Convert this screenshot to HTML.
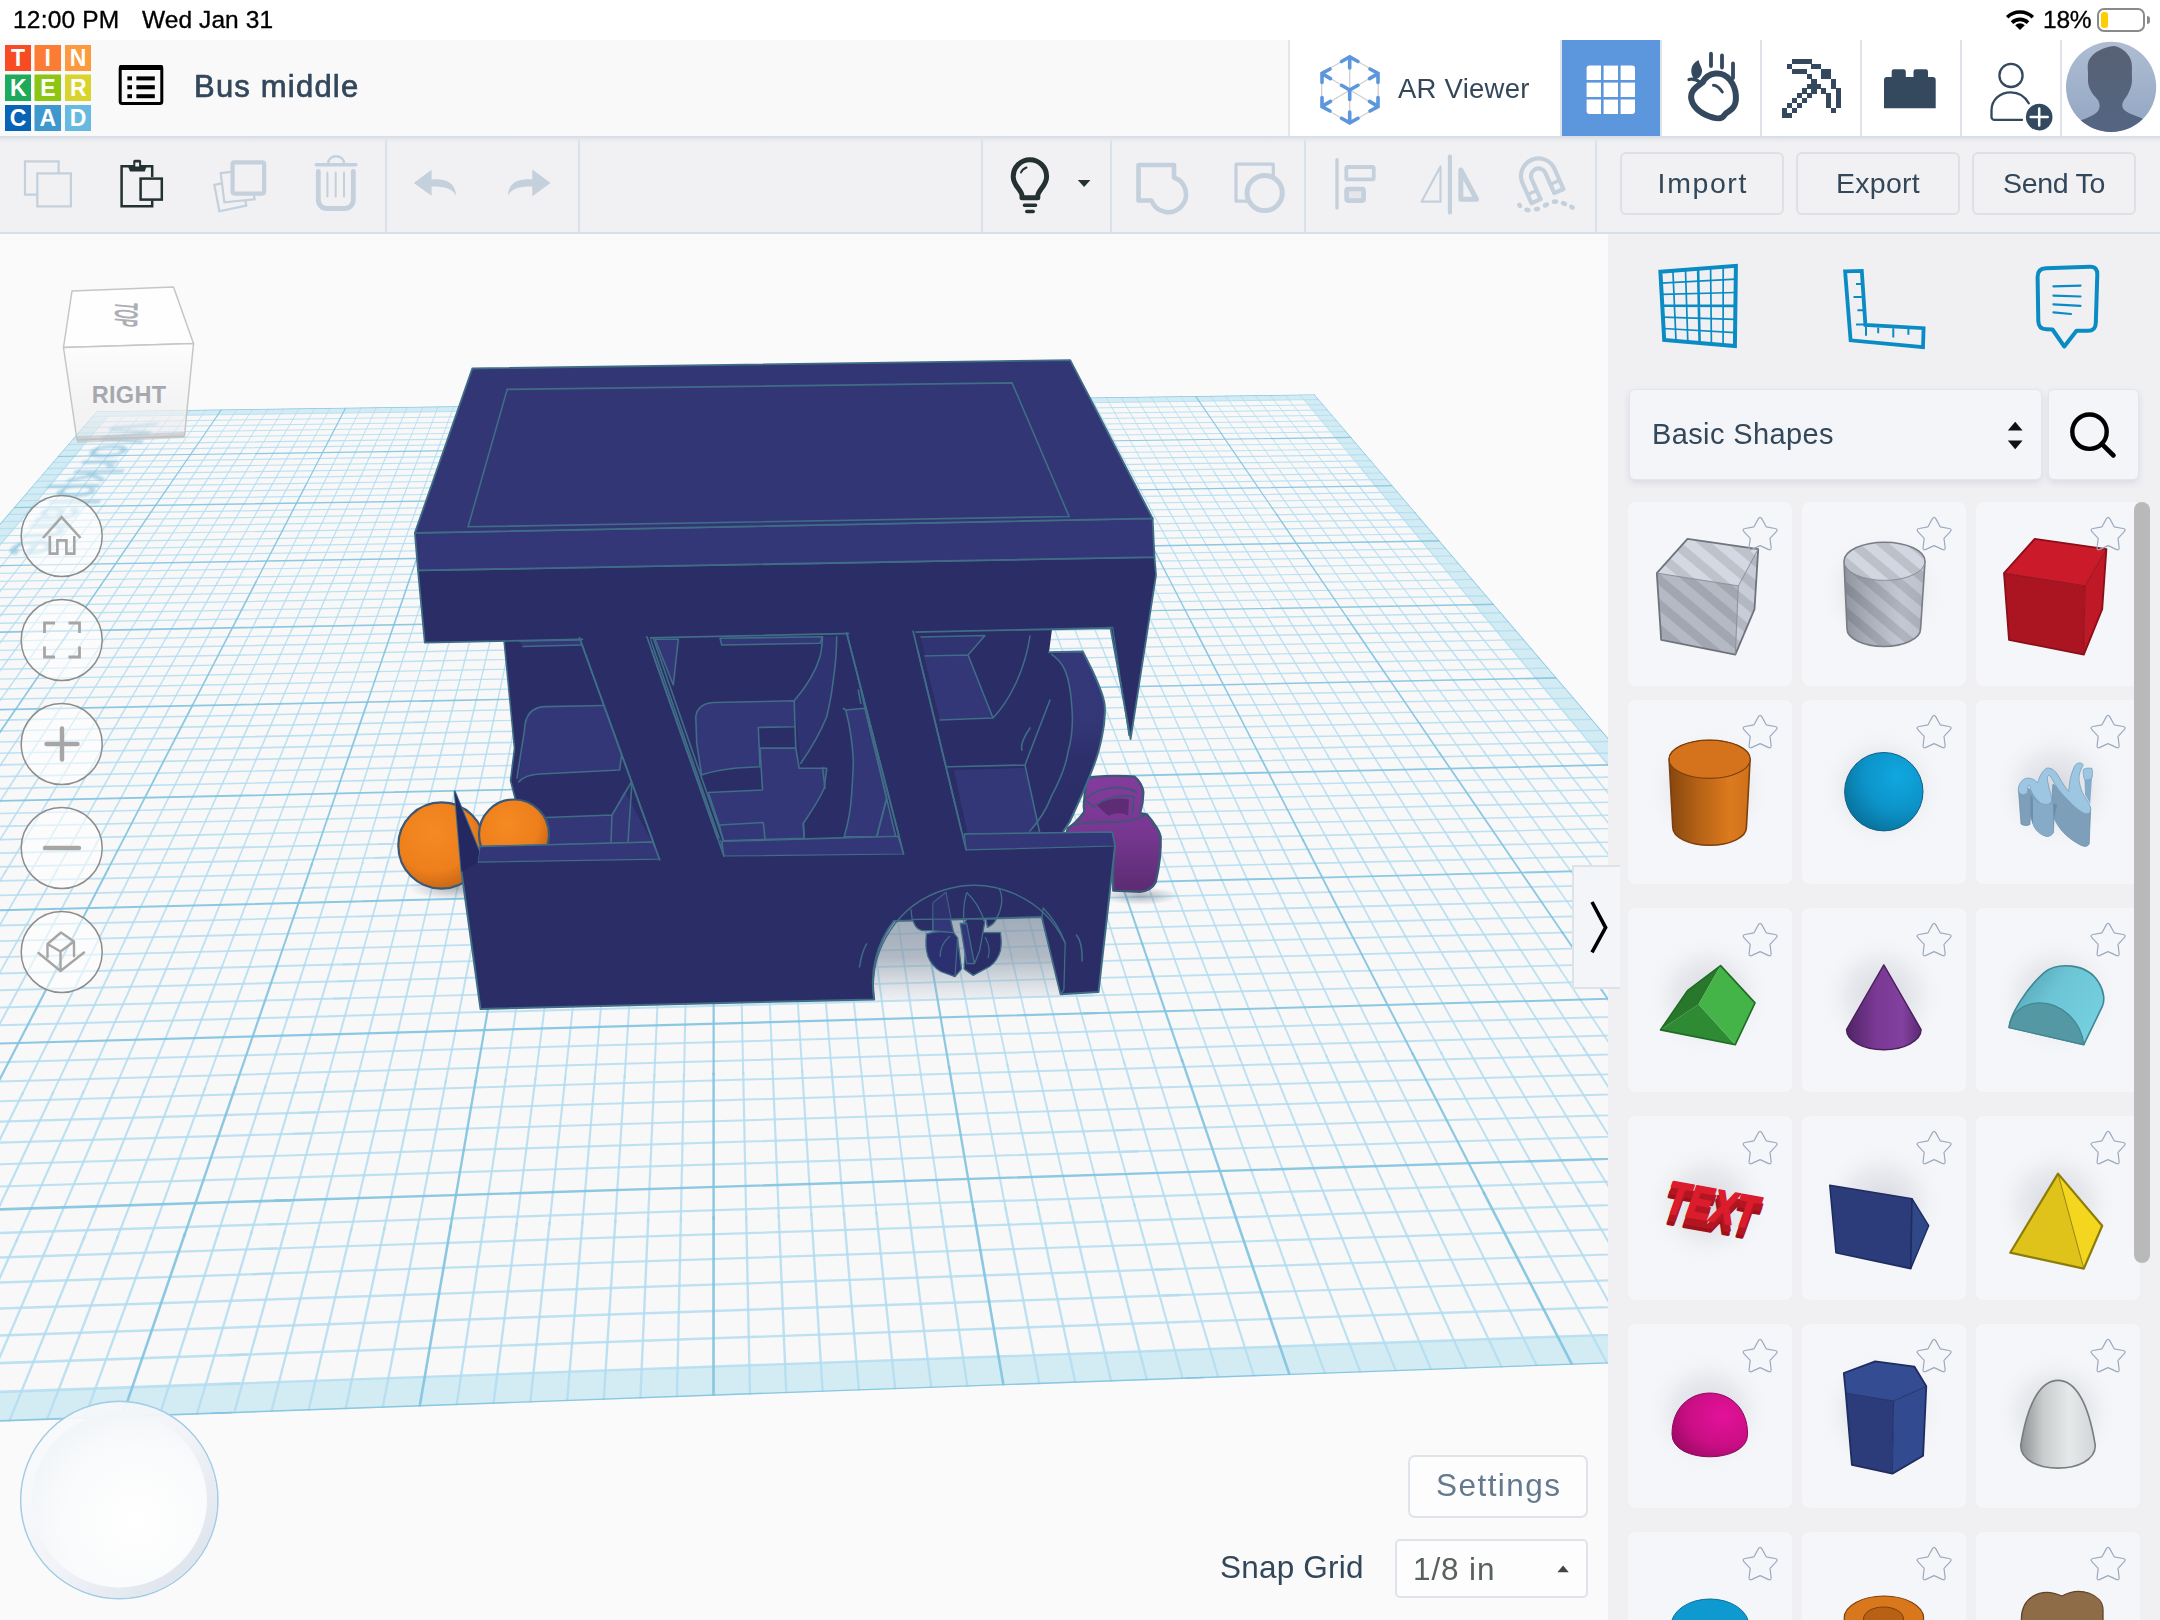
<!DOCTYPE html>
<html><head><meta charset="utf-8"><title>Tinkercad</title>
<style>
*{box-sizing:border-box;margin:0;padding:0}
html,body{width:2160px;height:1620px;overflow:hidden;background:#fff;font-family:"Liberation Sans",sans-serif}
.abs{position:absolute}
#status .t,#title,#arv,.btn,#bs,#settings,#snap,#snapv{will-change:transform}
#status{position:absolute;left:0;top:0;width:2160px;height:40px;background:#fff;color:#000}
#status .t{position:absolute;top:5px;font-size:24.5px;line-height:30px;letter-spacing:.2px;white-space:nowrap;-webkit-text-stroke:.35px #000}
#header{position:absolute;left:0;top:40px;width:2160px;height:96px;background:#f9f9f9}
#header .right{position:absolute;left:1288px;top:0;width:872px;height:96px;background:#fff;border-left:2px solid #e4e6ec}
#hshadow{position:absolute;left:0;top:136px;width:2160px;height:7px;background:linear-gradient(#d5dbe3,#e4e7ec 40%,rgba(241,241,244,0));z-index:5}
#toolbar{position:absolute;left:0;top:136px;width:2160px;height:98px;background:#f1f1f4;border-bottom:2px solid #d9dfe6}
.vsep{position:absolute;top:0;width:2px;height:96px;background:#dbe1e8}
#canvas{position:absolute;left:0;top:234px;width:1608px;height:1386px;background:#fafafa;overflow:hidden}
#panel{position:absolute;left:1608px;top:234px;width:552px;height:1386px;background:#f0f0f3;overflow:hidden}
.hsep{position:absolute;top:0;width:2px;height:96px;background:#dfe3e9}
.btn{position:absolute;top:16px;height:63px;border:2px solid #dce1e8;border-radius:6px;color:#33475b;font-size:28.5px;line-height:59px;text-align:center;letter-spacing:1.2px;background:#f1f1f4}
.card{position:absolute;width:164px;height:184px;background:#f5f6f9;border-radius:8px}
.star{position:absolute;left:113px;top:13px;width:38px;height:38px}
</style></head><body>
<div id="status">
 <div class="t" id="st1" style="left:12.5px">12:00 PM</div>
 <div class="t" id="st2" style="left:142px;letter-spacing:.08px">Wed Jan 31</div>
 <svg class="abs" style="left:2004px;top:7px" width="32" height="26" viewBox="0 0 32 26"><g fill="none" stroke="#000" stroke-width="3.6" stroke-linecap="butt"><path d="M3.2 10.2 A18.5 18.5 0 0 1 28.8 10.2"/><path d="M8 15.6 A11.6 11.6 0 0 1 24 15.6"/></g><path d="M16 23 L11.2 18.2 A6.6 6.6 0 0 1 20.8 18.2 Z" fill="#000"/></svg>
 <div class="t" id="st3" style="left:2043px;letter-spacing:-.25px">18%</div>
 <div class="abs" style="left:2097px;top:8px;width:48px;height:24px;border:2px solid #8a8a8a;border-radius:7px"></div>
 <div class="abs" style="left:2101px;top:12px;width:7px;height:16px;background:#ffcc00;border-radius:3px"></div>
 <div class="abs" style="left:2147px;top:16px;width:3px;height:8px;background:#8a8a8a;border-radius:0 3px 3px 0"></div>
</div>
<div id="header">
 <!-- logo -->
 <svg class="abs" style="left:0;top:0" width="100" height="96" viewBox="0 0 100 96">
  <g>
   <rect x="5" y="5" width="26" height="26" fill="#f84b24"/><rect x="34.5" y="5" width="26.5" height="26" fill="#fb7c35"/><rect x="65" y="5" width="26" height="26" fill="#fb9a3e"/>
   <rect x="5" y="34.5" width="26" height="26.5" fill="#1fa95b"/><rect x="34.5" y="34.5" width="26.5" height="26.5" fill="#8cc613"/><rect x="65" y="34.5" width="26" height="26.5" fill="#d8d32d"/>
   <rect x="5" y="65" width="26" height="26" fill="#0763b5"/><rect x="34.5" y="65" width="26.5" height="26" fill="#3e97cd"/><rect x="65" y="65" width="26" height="26" fill="#68b9e0"/>
  </g>
  <g fill="#fff" font-family="Liberation Sans" font-weight="bold" font-size="23" text-anchor="middle">
   <text x="18" y="26.3">T</text><text x="47.8" y="26.3">I</text><text x="78" y="26.3">N</text>
   <text x="18.3" y="56.2">K</text><text x="47.8" y="56.2">E</text><text x="78.3" y="56.2">R</text>
   <text x="18" y="86.3">C</text><text x="47.8" y="86.3">A</text><text x="78" y="86.3">D</text>
  </g>
 </svg>
 <!-- list icon -->
 <svg class="abs" style="left:117px;top:23px" width="48" height="44" viewBox="0 0 48 44">
  <rect x="3.2" y="3.5" width="41.6" height="37" rx="2" fill="none" stroke="#000" stroke-width="3"/>
  <rect x="2" y="2" width="44" height="5" rx="1.5" fill="#000"/>
  <g fill="#000"><rect x="10.4" y="13.4" width="4.6" height="4"/><rect x="19.4" y="13.4" width="18.4" height="4"/>
  <rect x="10.4" y="22.2" width="4.6" height="4.1"/><rect x="19.4" y="22.2" width="18.4" height="4.1"/>
  <rect x="10.4" y="31.2" width="4.6" height="4"/><rect x="19.4" y="31.2" width="18.4" height="4"/></g>
 </svg>
 <div class="abs" id="title" style="left:194.4px;top:27px;font-size:31px;line-height:40px;color:#33475b;white-space:nowrap;-webkit-text-stroke:.7px #33475b;letter-spacing:1.2px">Bus middle</div>
 <div class="right"></div>
</div>
<div id="hshadow"></div>
<!-- header right content, page coords -->
<div class="abs" style="left:1560px;top:40px;width:100px;height:96px;background:#5c96dc"></div>
<div class="abs" style="left:1560px;top:40px;width:2px;height:96px;background:#dfe3e9"></div>
<div class="abs" style="left:1660px;top:40px;width:2px;height:96px;background:#dfe3e9"></div>
<div class="abs" style="left:1760px;top:40px;width:2px;height:96px;background:#dfe3e9"></div>
<div class="abs" style="left:1860px;top:40px;width:2px;height:96px;background:#dfe3e9"></div>
<div class="abs" style="left:1960px;top:40px;width:2px;height:96px;background:#dfe3e9"></div>
<div class="abs" style="left:2060px;top:40px;width:2px;height:96px;background:#dfe3e9"></div>
<div class="abs" id="arv" style="left:1397.6px;top:68.5px;font-size:27.5px;line-height:40px;color:#33475b;white-space:nowrap;letter-spacing:.25px">AR Viewer</div>
<!-- AR cube icon -->
<svg class="abs" style="left:1316px;top:50px" width="68" height="80" viewBox="1316 50 68 80">
 <g stroke="#cfcfcf" stroke-width="1.3" fill="none"><path d="M1349.7 56.7 L1378.2 73.3 L1378.2 106.7 L1349.7 123 L1321.7 106.7 L1321.7 73.3 Z"/><path d="M1349.7 56.7 V123 M1321.7 73.3 L1378.2 106.7 M1378.2 73.3 L1321.7 106.7"/></g>
 <g stroke="#5c96dc" stroke-width="3.6" fill="none" stroke-linecap="round" stroke-linejoin="miter">
  <path d="M1341.5 61.5 L1349.7 56.9 L1358 61.5 M1349.7 57 V68"/>
  <path d="M1341.5 118.3 L1349.7 122.9 L1358 118.3 M1349.7 122.6 V112"/>
  <path d="M1322 82.5 V73.3 L1330 69 M1322 73.6 L1330.5 78.6"/>
  <path d="M1378 82.5 V73.3 L1370 69 M1378 73.6 L1369.5 78.6"/>
  <path d="M1322 97.5 V106.7 L1330 111 M1322 106.4 L1330.5 101.4"/>
  <path d="M1378 97.5 V106.7 L1370 111 M1378 106.4 L1369.5 101.4"/>
  <path d="M1341.5 85.3 L1349.7 90 L1358 85.3 M1349.7 90 V99.5"/>
 </g>
</svg>
<!-- grid icon -->
<svg class="abs" style="left:1586.300px;top:64.600px" width="50" height="50" viewBox="0 0 50 50" fill="#fff">
 <path d="M0.6 3.6 a3 3 0 0 1 3-3 H15 V15 H0.6Z"/><rect x="17.6" y="0.6" width="14.4" height="14.4"/><path d="M34.6 0.6 H46 a3 3 0 0 1 3 3 V15 H34.6Z"/>
 <rect x="0.6" y="17.6" width="14.4" height="14.4"/><rect x="17.6" y="17.6" width="14.4" height="14.4"/><rect x="34.6" y="17.6" width="14.4" height="14.4"/>
 <path d="M0.6 34.6 H15 V49 H3.6 a3 3 0 0 1 -3 -3Z"/><rect x="17.6" y="34.6" width="14.4" height="14.4"/><path d="M34.6 34.6 H49 V46 a3 3 0 0 1 -3 3 H34.6Z"/>
</svg>
<!-- apple/hand icon -->
<svg class="abs" style="left:1680px;top:48px" width="64" height="78" viewBox="1680 48 64 78">
 <g fill="none" stroke="#34495e" stroke-linecap="round">
  <path stroke-width="6" d="M1702.5 82.5 C1708 72 1722 70 1730 80 C1738 90 1736.5 103 1733.5 107 C1731 111.5 1727 111 1724.500 115 C1722 120 1714 118.500 1706 115 C1696 110.5 1689.500 102 1691.500 94 C1693 88 1698 86 1702.5 82.5Z"/>
  <path stroke-width="3.8" d="M1711 53.700 V66 M1722 55.500 V67.500 M1733 63.500 V78"/>
  <path stroke-width="3.2" d="M1689 79.500 C1693 78.500 1697 80 1700.500 82.500"/>
  <path stroke-width="3" d="M1713.500 85.300 C1717.500 85.500 1720 88.500 1722.300 92"/>
 </g>
 <path fill="#34495e" d="M1698.600 60 C1690 64 1689.500 73.500 1694.500 79.500 C1700 79 1703.500 73 1701.500 68 C1700.500 65 1699 63 1698.600 60Z"/>
 <path fill="#fff" d="M1709 66.800 h4 l0 3 h-4z M1720 68.800 l4 1.200 v3 h-4z M1731 76 l4.200 5.500 v3 h-4.200z" opacity="0"/>
</svg>
<!-- brick -->
<svg class="abs" style="left:1880px;top:65px" width="60" height="48" viewBox="1880 65 60 48" fill="#34495e">
 <path d="M1884 80 a3 3 0 0 1 3-3 h4.700 v-5.500 a2.300 2.300 0 0 1 2.300-2.300 h9.500 a2.300 2.300 0 0 1 2.300 2.300 v5.500 h7.700 v-5.500 a2.300 2.300 0 0 1 2.300-2.300 h9.900 a2.300 2.300 0 0 1 2.300 2.300 v5.500 h4.700 a3 3 0 0 1 3 3 v28.300 h-51.700z"/>
</svg>
<!-- person add -->
<svg class="abs" style="left:1985px;top:58px" width="72" height="76" viewBox="1985 58 72 76">
 <g fill="none" stroke="#34495e" stroke-width="2.300" stroke-linecap="round">
  <circle cx="2011" cy="75.400" r="11.600"/>
  <path d="M2022 119.900 H1994.500 a3 3 0 0 1 -3-3 V110.500 C1991.500 100 2000 92.300 2010.700 92.300 C2018.500 92.300 2025 96.500 2028.800 103.200"/>
 </g>
 <circle cx="2039.200" cy="117.100" r="15" fill="#fff"/>
 <circle cx="2039.200" cy="117.100" r="13.300" fill="#34495e"/>
 <path d="M2030.700 117.100 h17 M2039.200 108.600 v17" stroke="#fff" stroke-width="2.500" stroke-linecap="round"/>
</svg>
<!-- avatar -->
<svg class="abs" style="left:2064px;top:40px" width="96" height="96" viewBox="2064 40 96 96">
 <defs><linearGradient id="avbg" x1="0" y1="0" x2="0" y2="1"><stop offset="0" stop-color="#aebdd2"/><stop offset="1" stop-color="#92a5c2"/></linearGradient>
 <linearGradient id="avfg" x1="0" y1="0" x2="0" y2="1"><stop offset="0" stop-color="#586174"/><stop offset="1" stop-color="#536684"/></linearGradient>
 <clipPath id="avc"><circle cx="2111.100" cy="86.900" r="45.100"/></clipPath></defs>
 <circle cx="2111.100" cy="86.900" r="45.100" fill="url(#avbg)"/>
 <g clip-path="url(#avc)"><path fill="url(#avfg)" d="M2114 46 C2104 47 2093 52 2089 60 C2086.500 66 2088.500 72 2088 78 C2087.500 85 2090 90 2093.500 95 C2097 99 2100 101 2099.500 107 C2099 112 2094 115 2087 118 C2080 121 2072 123 2066 126 V140 H2158 V126 C2152 123 2146 120 2140 117.500 C2131 114 2124 112 2122.500 107 C2121.500 102 2125 99 2127.500 95 C2130 90 2132.500 85 2132 78 C2131.500 70 2133 64 2130 58 C2127 52 2121 47 2114 46Z"/></g>
</svg>
<svg class="abs" style="left:1781.6px;top:59.4px" width="60" height="60" viewBox="0 0 60 60" fill="#34495e" shape-rendering="crispEdges"><rect x="9.81" y="0.00" width="5.06" height="5.06"/><rect x="14.72" y="0.00" width="5.06" height="5.06"/><rect x="19.63" y="0.00" width="5.06" height="5.06"/><rect x="24.54" y="0.00" width="5.06" height="5.06"/><rect x="4.91" y="4.91" width="5.06" height="5.06"/><rect x="29.44" y="4.91" width="5.06" height="5.06"/><rect x="34.35" y="4.91" width="5.06" height="5.06"/><rect x="9.81" y="9.81" width="5.06" height="5.06"/><rect x="14.72" y="9.81" width="5.06" height="5.06"/><rect x="19.63" y="9.81" width="5.06" height="5.06"/><rect x="39.26" y="9.81" width="5.06" height="5.06"/><rect x="44.16" y="9.81" width="5.06" height="5.06"/><rect x="24.54" y="14.72" width="5.06" height="5.06"/><rect x="39.26" y="14.72" width="5.06" height="5.06"/><rect x="44.16" y="14.72" width="5.06" height="5.06"/><rect x="29.44" y="19.63" width="5.06" height="5.06"/><rect x="49.07" y="19.63" width="5.06" height="5.06"/><rect x="24.54" y="24.54" width="5.06" height="5.06"/><rect x="29.44" y="24.54" width="5.06" height="5.06"/><rect x="34.35" y="24.54" width="5.06" height="5.06"/><rect x="49.07" y="24.54" width="5.06" height="5.06"/><rect x="19.63" y="29.44" width="5.06" height="5.06"/><rect x="29.44" y="29.44" width="5.06" height="5.06"/><rect x="39.26" y="29.44" width="5.06" height="5.06"/><rect x="53.98" y="29.44" width="5.06" height="5.06"/><rect x="14.72" y="34.35" width="5.06" height="5.06"/><rect x="24.54" y="34.35" width="5.06" height="5.06"/><rect x="44.16" y="34.35" width="5.06" height="5.06"/><rect x="53.98" y="34.35" width="5.06" height="5.06"/><rect x="9.81" y="39.26" width="5.06" height="5.06"/><rect x="19.63" y="39.26" width="5.06" height="5.06"/><rect x="44.16" y="39.26" width="5.06" height="5.06"/><rect x="53.98" y="39.26" width="5.06" height="5.06"/><rect x="4.91" y="44.16" width="5.06" height="5.06"/><rect x="14.72" y="44.16" width="5.06" height="5.06"/><rect x="44.16" y="44.16" width="5.06" height="5.06"/><rect x="53.98" y="44.16" width="5.06" height="5.06"/><rect x="0.00" y="49.07" width="5.06" height="5.06"/><rect x="9.81" y="49.07" width="5.06" height="5.06"/><rect x="49.07" y="49.07" width="5.06" height="5.06"/><rect x="0.00" y="53.98" width="5.06" height="5.06"/><rect x="4.91" y="53.98" width="5.06" height="5.06"/></svg>
<div id="toolbar">
 <div class="vsep" style="left:385px"></div><div class="vsep" style="left:578px"></div><div class="vsep" style="left:981px"></div><div class="vsep" style="left:1110px"></div><div class="vsep" style="left:1304px"></div><div class="vsep" style="left:1594.5px"></div>
 <div class="btn" id="b1" style="left:1620px;width:164px;letter-spacing:1.6px;text-indent:1.6px">Import</div>
 <div class="btn" id="b2" style="left:1796px;width:164px;letter-spacing:.24px">Export</div>
 <div class="btn" id="b3" style="left:1972px;width:164px;letter-spacing:-.27px">Send To</div>
</div>
<!-- toolbar icons, page coords -->
<svg class="abs" style="left:0;top:136px" width="1608" height="98" viewBox="0 136 1608 98">
 <g fill="none" stroke="#c4d0dc">
  <!-- copy -->
  <rect x="25" y="161.400" width="33.600" height="33.200" stroke-width="2.200"/>
  <rect x="37.300" y="173.400" width="33.600" height="33" stroke-width="2.200" fill="#f1f1f4"/>
  <!-- duplicate -->
  <g stroke-width="2.200" fill="#f1f1f4"><path d="M214.600 201.600 L240 196.400 L246 225 L220.500 227.300Z" transform="translate(0,0)" opacity="0"/>
   <path d="M214.300 184.800 L241 179.500 L246.300 205.600 L219.400 211.300Z"/>
   <path d="M220.700 173.100 L251 169.500 L254.600 199.300 L224.400 202.400Z"/></g>
  <rect x="232.600" y="162.400" width="31.500" height="31.200" rx="2" stroke-width="4.200" fill="#f1f1f4"/>
  <!-- trash -->
  <g stroke-linecap="round"><path d="M316.200 164.800 H356" stroke-width="3.400"/><path d="M328.300 163.500 v-1 a7.800 6.200 0 0 1 15.600 0 v1" stroke-width="2.400"/>
  <path d="M318.300 171.500 V200 a8.500 8.500 0 0 0 8.500 8.500 H344.800 a8.500 8.500 0 0 0 8.500-8.500 V171.500" stroke-width="4.800"/>
  <path d="M327.400 172.500 V196.500 M335.700 172.500 V196.500 M344 172.500 V196.500" stroke-width="2"/></g>
 </g>
 <!-- paste -->
 <g fill="none" stroke="#233131" stroke-width="2.500">
  <path d="M152.200 200.500 V206.200 H121.600 V166.300 H152.200 V177"/>
  <rect x="140.600" y="178.600" width="21.200" height="21" fill="#f1f1f4"/>
 </g>
 <path d="M127.500 165 H147 L144.800 171.500 H130Z" fill="#233131"/><rect x="133.300" y="159.800" width="7.800" height="8" rx="1.500" fill="#233131"/><rect x="135.300" y="162.500" width="3.800" height="4" fill="#f1f1f4"/>
 <!-- undo / redo -->
 <g fill="#c4d0dc">
  <path d="M413.700 183 L431.600 169.800 V179.500 C444 178.500 455.500 181.500 456 195.700 C452.500 188.500 445 186.500 431.600 186.600 V195.800Z"/>
  <path d="M550.600 183 L532.300 169.500 V179.500 C520 178.500 508.500 181.500 508 195.700 C511.500 188.500 519 186.500 532.300 186.600 V196.200Z"/>
 </g>
 <!-- bulb -->
 <g fill="none" stroke="#233131" stroke-linecap="round">
  <path stroke-width="5" d="M1022 197.800 V196 C1022 190 1013.200 186 1013.200 176.400 A16.700 16.700 0 0 1 1046.600 176.400 C1046.600 186 1037.800 190 1037.800 196 V197.800Z" stroke-linejoin="round"/>
  <path stroke-width="2" d="M1021 172.500 C1022 170 1024 168.500 1026.500 167.500"/>
  <path stroke-width="3.600" d="M1024.500 205.300 H1035.500 M1026.800 211.500 H1033.200"/>
 </g>
 <path d="M1077.800 179.900 H1090.400 L1084.100 186.900Z" fill="#233131"/>
 <!-- group -->
 <g fill="none" stroke="#c4d0dc" stroke-linejoin="round">
  <path stroke-width="4.600" d="M1138.500 165 H1174 V177.500 A17.800 17.800 0 1 1 1151.500 200.500 H1138.500Z"/>
  <rect x="1236" y="164.200" width="37.300" height="37" stroke-width="3.200"/>
  <circle cx="1264.700" cy="193" r="17.600" stroke-width="5" fill="#f1f1f4"/>
  <!-- align -->
  <path d="M1337 159.800 V208" stroke-width="3.400" stroke-linecap="round"/>
  <rect x="1346.300" y="167" width="27.400" height="12.400" rx="1.500" stroke-width="3.800"/>
  <rect x="1346.600" y="189" width="17" height="11.600" rx="1.500" stroke-width="4.600" fill="#e4e6ea"/>
  <!-- mirror -->
  <path d="M1449.900 156.500 V212.500" stroke-width="4.200" stroke-linecap="round"/>
  <path d="M1440.500 166.500 V201.700 H1421.500Z" stroke-width="2.200"/>
  <path d="M1460.800 170 V199.200 H1476.500Z" stroke-width="5"/>
 </g>
 <!-- magnet -->
 <g transform="translate(1538.500,176) rotate(-24)" fill="none" stroke="#c4d0dc" stroke-width="4.200" stroke-linejoin="round">
  <path d="M-17.500 22 V0 A17.500 17.500 0 0 1 17.500 0 V22 H7.500 V0 A7.500 7.500 0 0 0 -7.500 0 V22Z"/>
  <path d="M-17.500 12.500 H-7.500 M17.500 12.500 H7.500" stroke-width="3.400"/>
 </g>
 <g fill="#c4d0dc">
  <ellipse cx="1519.700" cy="205.400" rx="2.300" ry="2.800" transform="rotate(-30 1519.700 205.400)"/><ellipse cx="1527.500" cy="210" rx="3.300" ry="2.400" transform="rotate(10 1527.500 210)"/><ellipse cx="1537" cy="209" rx="3.300" ry="2.400" transform="rotate(-15 1537 209)"/><ellipse cx="1546" cy="205" rx="3.300" ry="2.400" transform="rotate(-25 1546 205)"/><ellipse cx="1555" cy="201.600" rx="3.300" ry="2.400" transform="rotate(-5 1555 201.600)"/><ellipse cx="1564" cy="203.500" rx="3.300" ry="2.400" transform="rotate(20 1564 203.500)"/><ellipse cx="1572" cy="207.200" rx="3" ry="2.300" transform="rotate(30 1572 207.200)"/>
 </g>
</svg>
<div id="canvas"></div><div id="panel"></div>
<svg class="abs" style="left:0;top:234px" width="1608" height="1386" viewBox="0 234 1608 1386">
<g>
<clipPath id="planeclip"><path d="M96.7 411.2L1314.5 394.5L2126.3 1344.8L-795.5 1450.4Z"/></clipPath>
<g clip-path="url(#planeclip)">
<path d="M96.7 411.2L1314.5 394.5L2126.3 1344.8L-795.5 1450.4Z" fill="#f8f8f9"/>
<path d="M96.7 411.2L1314.5 394.5L2126.3 1344.8L-795.5 1450.4Z M107.8 416.4L-730.5 1417.8L2069.2 1318.5L1303.9 399.8Z" fill="#d3ecf4" fill-rule="evenodd"/>
<g fill="none" stroke="#b2ddef" stroke-opacity="0.84">
<path stroke-width="1.0" d="M112.6 410.7L80.8 448.6M128.2 410.4L97.3 448.4M143.8 410.2L113.7 448.2M159.4 410.0L130.2 447.9M175.0 409.8L146.6 447.7M190.6 409.6L163.0 447.4M206.2 409.4L179.4 447.2M237.3 408.9L212.1 446.7M252.8 408.7L228.5 446.5M268.3 408.5L244.9 446.2M283.9 408.3L261.2 446.0M299.4 408.1L277.5 445.8M314.8 407.9L293.8 445.5M330.3 407.7L310.1 445.3M361.3 407.2L342.7 444.8M376.7 407.0L359.0 444.6M392.2 406.8L375.2 444.3M407.6 406.6L391.5 444.1M423.0 406.4L407.7 443.9M438.4 406.2L423.9 443.6M453.8 406.0L440.1 443.4M484.6 405.5L472.5 442.9M499.9 405.3L488.7 442.7M515.3 405.1L504.9 442.5M530.6 404.9L521.0 442.2M546.0 404.7L537.2 442.0M561.3 404.5L553.3 441.7M576.6 404.3L569.4 441.5M607.2 403.9L601.6 441.0M622.5 403.7L617.7 440.8M637.7 403.4L633.7 440.6M653.0 403.2L649.8 440.3M668.2 403.0L665.8 440.1M683.5 402.8L681.9 439.9M698.7 402.6L697.9 439.6M729.1 402.2L729.9 439.2M744.3 402.0L745.9 438.9M759.5 401.8L761.9 438.7M774.7 401.6L777.8 438.5M789.9 401.3L793.8 438.2M805.0 401.1L809.7 438.0M820.2 400.9L825.7 437.8M850.4 400.5L857.5 437.3M865.5 400.3L873.4 437.1M880.6 400.1L889.3 436.9M895.7 399.9L905.1 436.6M910.8 399.7L921.0 436.4M925.9 399.5L936.9 436.2M940.9 399.3L952.7 435.9M971.0 398.9L984.3 435.5M986.1 398.7L1000.1 435.2M1001.1 398.4L1015.9 435.0M1016.1 398.2L1031.7 434.8M1031.1 398.0L1047.5 434.5M1047.1 433.8L1065.3 474.2M1046.1 397.8L1063.2 434.3M1062.9 433.6L1081.9 473.9M1061.1 397.6L1079.0 434.1M1078.6 433.3L1098.5 473.7M1091.0 397.2L1110.5 433.6M1110.1 432.9L1131.6 473.2M1106.0 397.0L1126.2 433.4M1125.8 432.6L1148.1 472.9M1120.9 396.8L1141.9 433.2M1141.4 432.4L1164.7 472.7M1135.8 396.6L1157.6 432.9M1157.1 432.2L1181.2 472.4M1150.7 396.4L1173.2 432.7M1172.8 432.0L1197.7 472.1M1165.6 396.2L1188.9 432.5M1188.4 431.7L1214.2 471.9M1180.5 396.0L1204.6 432.3M1204.1 431.5L1230.7 471.6M1210.3 395.6L1235.9 431.8M1235.3 431.1L1263.6 471.1M1225.2 395.4L1251.5 431.6M1250.9 430.8L1280.0 470.9M1240.0 395.2L1267.1 431.3M1266.5 430.6L1296.5 470.6M1254.9 395.0L1282.7 431.1M1282.1 430.4L1312.9 470.4M1269.7 394.8L1298.3 430.9M1297.7 430.1L1329.3 470.1M1284.6 394.6L1313.9 430.7M1313.3 429.9L1345.7 469.9M1299.4 394.3L1329.4 430.4M1328.8 429.7L1362.1 469.6"/>
<path stroke-width="1.2" d="M81.5 447.9L46.2 490.0M46.9 489.1L7.6 536.1M8.4 535.1L-35.7 587.9M97.9 447.6L63.6 489.7M64.3 488.8L26.0 535.8M26.8 534.8L-16.2 587.5M114.3 447.4L80.9 489.4M81.6 488.6L44.4 535.5M45.1 534.5L3.3 587.2M130.8 447.1L98.3 489.2M99.0 488.3L62.7 535.2M63.5 534.2L22.8 586.8M147.2 446.9L115.6 488.9M116.3 488.0L81.1 534.9M81.8 533.9L42.3 586.5M163.6 446.7L132.9 488.6M133.6 487.8L99.4 534.6M100.1 533.6L61.8 586.2M179.9 446.4L150.2 488.4M150.8 487.5L117.7 534.3M118.4 533.3L81.2 585.8M212.7 445.9L184.8 487.8M185.4 487.0L154.3 533.7M154.9 532.7L120.1 585.1M229.0 445.7L202.1 487.6M202.6 486.7L172.6 533.4M173.2 532.4L139.5 584.8M245.3 445.5L219.3 487.3M219.9 486.4L190.8 533.1M191.4 532.1L158.9 584.4M261.7 445.2L236.6 487.0M237.1 486.2L209.1 532.8M209.7 531.8L178.2 584.1M278.0 445.0L253.8 486.8M254.3 485.9L227.3 532.5M227.9 531.5L197.6 583.8M294.3 444.8L271.0 486.5M271.5 485.6L245.5 532.2M246.0 531.2L216.9 583.4M310.6 444.5L288.2 486.2M288.7 485.4L263.7 531.9M264.2 530.9L236.2 583.1M343.1 444.0L322.5 485.7M323.0 484.8L300.1 531.3M300.5 530.3L274.8 582.4M359.4 443.8L339.7 485.4M340.1 484.6L318.2 531.0M318.7 530.0L294.1 582.1M375.6 443.6L356.8 485.2M357.2 484.3L336.3 530.7M336.8 529.7L313.3 581.7M391.8 443.3L374.0 484.9M374.3 484.0L354.5 530.4M354.9 529.4L332.6 581.4M408.0 443.1L391.1 484.6M391.5 483.8L372.6 530.1M373.0 529.1L351.8 581.0M424.2 442.9L408.2 484.4M408.5 483.5L390.7 529.8M391.0 528.8L371.0 580.7M440.4 442.6L425.3 484.1M425.6 483.2L408.7 529.5M409.1 528.5L390.2 580.4M472.8 442.2L459.4 483.6M459.7 482.7L444.9 528.9M445.2 527.9L428.5 579.7M488.9 441.9L476.5 483.3M476.8 482.5L462.9 528.6M463.2 527.6L447.6 579.4M505.1 441.7L493.5 483.1M493.8 482.2L480.9 528.3M481.2 527.3L466.8 579.0M521.2 441.4L510.6 482.8M510.8 481.9L498.9 528.0M499.2 527.0L485.9 578.7M537.3 441.2L527.6 482.5M527.8 481.7L516.9 527.7M517.1 526.7L505.0 578.3M553.4 441.0L544.6 482.3M544.8 481.4L534.9 527.4M535.1 526.4L524.0 578.0M569.5 440.7L561.6 482.0M561.7 481.1L552.9 527.1M553.0 526.2L543.1 577.7M601.7 440.3L595.5 481.5M595.6 480.6L588.7 526.5M588.9 525.6L581.1 577.0M617.8 440.0L612.5 481.2M612.6 480.4L606.7 526.2M606.8 525.3L600.2 576.7M633.8 439.8L629.4 480.9M629.5 480.1L624.6 525.9M624.7 525.0L619.1 576.3M649.9 439.6L646.3 480.7M646.4 479.8L642.5 525.6M642.5 524.7L638.1 576.0M665.9 439.3L663.2 480.4M663.3 479.6L660.3 525.3M660.4 524.4L657.1 575.7M681.9 439.1L680.1 480.2M680.2 479.3L678.2 525.0M678.2 524.1L676.0 575.3M697.9 438.9L697.0 479.9M697.0 479.1L696.0 524.7M696.1 523.8L694.9 575.0M729.9 438.4L730.8 479.4M730.7 478.5L731.7 524.2M731.7 523.2L732.7 574.3M745.9 438.2L747.6 479.1M747.6 478.3L749.5 523.9M749.5 522.9L751.6 574.0M761.8 437.9L764.4 478.9M764.4 478.0L767.3 523.6M767.2 522.6L770.5 573.7M777.8 437.7L781.3 478.6M781.2 477.8L785.1 523.3M785.0 522.3L789.3 573.3M793.7 437.5L798.1 478.3M798.0 477.5L802.8 523.0M802.7 522.0L808.2 573.0M809.6 437.2L814.9 478.1M814.8 477.2L820.6 522.7M820.4 521.7L827.0 572.7M825.5 437.0L831.6 477.8M831.5 477.0L838.3 522.4M838.2 521.5L845.8 572.3M857.3 436.6L865.2 477.3M865.0 476.5L873.7 521.8M873.5 520.9L883.3 571.7M873.2 436.3L881.9 477.0M881.7 476.2L891.4 521.5M891.2 520.6L902.1 571.3M889.1 436.1L898.6 476.8M898.4 475.9L909.1 521.2M908.9 520.3L920.8 571.0M904.9 435.9L915.4 476.5M915.2 475.7L926.8 520.9M926.5 520.0L939.5 570.7M920.8 435.6L932.1 476.3M931.8 475.4L944.4 520.6M944.1 519.7L958.2 570.4M936.6 435.4L948.8 476.0M948.5 475.2L962.0 520.4M961.8 519.4L976.9 570.0M952.4 435.2L965.5 475.7M965.2 474.9L979.7 520.1M979.4 519.1L995.6 569.7M984.1 434.7L998.8 475.2M998.5 474.4L1014.9 519.5M1014.5 518.6L1032.9 569.0M999.8 434.5L1015.4 475.0M1015.1 474.1L1032.4 519.2M1032.1 518.3L1051.5 568.7M1015.6 434.3L1032.1 474.7M1031.7 473.9L1050.0 518.9M1049.6 518.0L1070.1 568.4M1031.4 434.0L1048.7 474.5M1048.3 473.6L1067.5 518.6M1067.1 517.7L1088.7 568.1M1064.9 473.4L1085.1 518.3M1084.7 517.4L1107.2 567.7M1081.5 473.1L1102.6 518.0M1102.2 517.1L1125.8 567.4M1125.3 566.4L1152.0 623.0M1098.0 472.9L1120.1 517.7M1119.6 516.8L1144.3 567.1M1143.8 566.0L1171.7 622.7M1131.1 472.3L1155.1 517.2M1154.6 516.2L1181.4 566.4M1180.8 565.4L1211.0 621.9M1147.7 472.1L1172.5 516.9M1172.0 516.0L1199.9 566.1M1199.3 565.1L1230.7 621.6M1164.2 471.8L1190.0 516.6M1189.5 515.7L1218.4 565.8M1217.8 564.7L1250.3 621.2M1180.7 471.6L1207.4 516.3M1206.9 515.4L1236.8 565.4M1236.2 564.4L1270.0 620.8M1197.2 471.3L1224.9 516.0M1224.3 515.1L1255.3 565.1M1254.6 564.1L1289.6 620.4M1213.6 471.1L1242.3 515.7M1241.7 514.8L1273.7 564.8M1273.1 563.8L1309.1 620.1M1230.1 470.8L1259.7 515.4M1259.1 514.5L1292.1 564.5M1291.4 563.4L1328.7 619.7M1263.0 470.3L1294.4 514.9M1293.8 514.0L1328.9 563.8M1328.2 562.8L1367.8 619.0M1279.4 470.0L1311.8 514.6M1311.1 513.7L1347.3 563.5M1346.5 562.5L1387.3 618.6M1295.8 469.8L1329.1 514.3M1328.4 513.4L1365.7 563.2M1364.9 562.1L1406.8 618.2M1312.2 469.5L1346.4 514.0M1345.7 513.1L1384.0 562.9M1383.2 561.8L1426.3 617.9M1328.6 469.3L1363.8 513.7M1363.0 512.8L1402.3 562.5M1401.5 561.5L1445.8 617.5M1345.0 469.0L1381.1 513.4M1380.3 512.5L1420.6 562.2M1419.8 561.2L1465.2 617.1M1361.4 468.8L1398.3 513.2M1397.6 512.2L1438.9 561.9M1438.1 560.9L1484.6 616.8"/>
<path stroke-width="1.4" d="M4.2 586.1L-43.1 645.6M23.7 585.7L-22.3 645.2M43.1 585.4L-1.5 644.8M-0.6 643.6L-51.5 711.3M62.6 585.1L19.2 644.5M20.1 643.2L-29.2 710.9M82.0 584.7L40.0 644.1M40.8 642.8L-7.0 710.4M120.8 584.0L81.4 643.3M82.2 642.0L37.3 709.5M140.2 583.7L102.1 642.9M102.9 641.7L59.5 709.1M159.5 583.4L122.7 642.5M123.5 641.3L81.6 708.6M178.9 583.0L143.4 642.1M144.1 640.9L103.7 708.2M198.2 582.7L164.0 641.7M164.7 640.5L125.8 707.7M217.5 582.3L184.6 641.3M185.3 640.1L147.8 707.3M236.8 582.0L205.2 640.9M205.9 639.7L169.9 706.8M275.4 581.3L246.3 640.2M246.9 638.9L213.9 705.9M294.6 581.0L266.9 639.8M267.4 638.5L235.8 705.5M313.8 580.6L287.4 639.4M287.9 638.2L257.8 705.0M333.0 580.3L307.9 639.0M308.4 637.8L279.7 704.6M352.2 580.0L328.3 638.6M328.8 637.4L301.6 704.2M371.4 579.6L348.8 638.2M349.3 637.0L323.5 703.7M390.6 579.3L369.2 637.8M369.7 636.6L345.4 703.3M428.9 578.6L410.0 637.1M410.4 635.8L389.0 702.4M448.0 578.3L430.4 636.7M430.8 635.5L410.8 701.9M467.1 577.9L450.8 636.3M451.1 635.1L432.6 701.5M486.1 577.6L471.1 635.9M471.4 634.7L454.4 701.0M505.2 577.3L491.5 635.5M491.7 634.3L476.1 700.6M524.3 576.9L511.8 635.1M512.0 633.9L497.8 700.2M543.3 576.6L532.1 634.8M532.3 633.5L519.5 699.7M581.3 575.9L572.6 634.0M572.8 632.8L562.8 698.8M600.3 575.6L592.8 633.6M593.0 632.4L584.5 698.4M619.3 575.3L613.0 633.2M613.2 632.0L606.1 698.0M638.2 574.9L633.2 632.8M633.3 631.6L627.7 697.5M657.1 574.6L653.4 632.5M653.5 631.3L649.2 697.1M676.1 574.3L673.6 632.1M673.6 630.9L670.8 696.6M695.0 573.9L693.7 631.7M693.7 630.5L692.3 696.2M732.7 573.3L733.9 630.9M733.9 629.7L735.3 695.3M751.6 572.9L754.0 630.6M754.0 629.4L756.7 694.9M770.4 572.6L774.1 630.2M774.0 629.0L778.2 694.5M789.2 572.3L794.1 629.8M794.0 628.6L799.6 694.0M808.0 571.9L814.2 629.4M814.0 628.2L821.0 693.6M826.8 571.6L834.2 629.1M834.0 627.9L842.4 693.1M845.6 571.3L854.2 628.7M854.0 627.5L863.7 692.7M883.1 570.6L894.1 627.9M893.9 626.7L906.4 691.8M906.1 690.5L920.5 765.1M901.8 570.3L914.1 627.5M913.8 626.3L927.7 691.4M927.4 690.0L943.3 764.6M920.5 570.0L934.0 627.2M933.7 626.0L949.0 691.0M948.7 689.6L966.2 764.1M939.2 569.6L953.9 626.8M953.6 625.6L970.2 690.5M969.9 689.2L989.0 763.6M957.9 569.3L973.8 626.4M973.4 625.2L991.5 690.1M991.1 688.7L1011.7 763.1M976.6 569.0L993.6 626.0M993.3 624.8L1012.7 689.7M1012.3 688.3L1034.5 762.6M995.2 568.6L1013.5 625.7M1013.1 624.5L1033.9 689.2M1033.4 687.9L1057.2 762.1M1032.5 568.0L1053.1 624.9M1052.7 623.7L1076.2 688.4M1075.7 687.0L1102.6 761.1M1051.1 567.7L1072.9 624.5M1072.5 623.4L1097.3 688.0M1096.8 686.6L1125.3 760.6M1069.7 567.3L1092.7 624.2M1092.2 623.0L1118.4 687.5M1117.9 686.2L1147.9 760.1M1088.2 567.0L1112.5 623.8M1112.0 622.6L1139.5 687.1M1139.0 685.7L1170.5 759.6M1106.8 566.7L1132.2 623.4M1131.7 622.2L1160.6 686.7M1160.0 685.3L1193.1 759.1M1151.4 621.9L1181.7 686.2M1181.0 684.9L1215.7 758.6M1171.1 621.5L1202.7 685.8M1202.0 684.5L1238.2 758.1M1210.4 620.7L1244.7 685.0M1244.0 683.6L1283.3 757.1M1230.0 620.4L1265.7 684.5M1264.9 683.2L1305.7 756.6M1249.7 620.0L1286.6 684.1M1285.9 682.8L1328.2 756.2M1269.3 619.6L1307.6 683.7M1306.8 682.3L1350.6 755.7M1288.8 619.3L1328.5 683.2M1327.6 681.9L1373.0 755.2M1308.4 618.9L1349.4 682.8M1348.5 681.5L1395.4 754.7M1327.9 618.5L1370.2 682.4M1369.4 681.1L1417.8 754.2M1367.0 617.8L1411.9 681.6M1411.0 680.2L1462.4 753.2M1386.5 617.4L1432.7 681.1M1431.8 679.8L1484.7 752.7M1405.9 617.1L1453.5 680.7M1452.5 679.4L1507.0 752.2M1425.4 616.7L1474.3 680.3M1473.3 678.9L1529.2 751.7M1444.8 616.3L1495.1 679.9M1494.0 678.5L1551.5 751.2M1464.3 616.0L1515.8 679.4M1514.7 678.1L1573.7 750.7M1483.7 615.6L1536.5 679.0M1535.4 677.7L1595.8 750.3"/>
<path stroke-width="1.6" d="M38.3 708.1L-13.3 785.7M60.4 707.7L10.5 785.2M11.5 783.5L-46.4 873.6M82.5 707.2L34.3 784.6M35.3 783.0L-20.7 873.0M104.5 706.8L58.1 784.1M59.0 782.5L5.1 872.3M126.6 706.3L81.8 783.6M82.8 782.0L30.8 871.7M148.6 705.9L105.5 783.1M106.4 781.5L56.4 871.1M170.6 705.4L129.2 782.6M130.1 780.9L82.1 870.5M214.6 704.5L176.6 781.5M177.4 779.9L133.3 869.3M236.5 704.1L200.2 781.0M201.0 779.4L158.8 868.7M258.4 703.6L223.8 780.5M224.5 778.9L184.3 868.0M280.3 703.2L247.4 780.0M248.1 778.3L209.8 867.4M302.2 702.8L270.9 779.4M271.6 777.8L235.3 866.8M324.0 702.3L294.5 778.9M295.1 777.3L260.7 866.2M345.9 701.9L318.0 778.4M318.5 776.8L286.1 865.6M389.5 701.0L364.9 777.4M365.4 775.8L336.9 864.4M411.2 700.5L388.3 776.9M388.8 775.2L362.2 863.8M433.0 700.1L411.7 776.3M412.2 774.7L387.5 863.2M454.7 699.7L435.1 775.8M435.5 774.2L412.8 862.6M476.4 699.2L458.5 775.3M458.8 773.7L438.0 862.0M498.1 698.8L481.8 774.8M482.1 773.2L463.2 861.4M519.8 698.3L505.1 774.3M505.4 772.7L488.4 860.8M563.0 697.4L551.6 773.3M551.9 771.7L538.7 859.6M584.6 697.0L574.9 772.7M575.1 771.2L563.7 859.0M606.2 696.6L598.1 772.2M598.2 770.6L588.8 858.4M627.8 696.1L621.3 771.7M621.4 770.1L613.9 857.8M649.3 695.7L644.4 771.2M644.5 769.6L638.9 857.2M670.8 695.3L667.6 770.7M667.6 769.1L663.8 856.6M692.3 694.8L690.7 770.2M690.7 768.6L688.8 856.0M735.2 693.9L736.8 769.2M736.8 767.6L738.6 854.8M756.7 693.5L759.9 768.7M759.8 767.1L763.5 854.2M778.1 693.1L782.9 768.2M782.8 766.6L788.3 853.6M799.5 692.6L805.9 767.7M805.7 766.1L813.1 853.0M820.9 692.2L828.8 767.2M828.7 765.6L837.9 852.4M842.2 691.8L851.8 766.6M851.6 765.1L862.7 851.8M863.5 691.3L874.7 766.1M874.5 764.6L887.4 851.2M920.2 763.6L936.8 850.0M943.0 763.1L961.4 849.4M965.8 762.6L986.1 848.8M988.6 762.1L1010.7 848.3M1011.3 761.6L1035.2 847.7M1034.0 761.1L1059.8 847.1M1056.7 760.6L1084.3 846.5M1102.1 759.6L1133.2 845.3M1124.7 759.1L1157.6 844.7M1147.3 758.6L1182.0 844.1M1169.9 758.1L1206.4 843.6M1192.4 757.6L1230.8 843.0M1215.0 757.1L1255.1 842.4M1237.5 756.6L1279.4 841.8M1282.4 755.6L1327.9 840.7M1304.9 755.1L1352.1 840.1M1327.3 754.6L1376.3 839.5M1349.7 754.1L1400.4 838.9M1372.1 753.6L1424.6 838.3M1394.4 753.1L1448.7 837.8M1416.8 752.6L1472.8 837.2M1461.4 751.7L1520.8 836.0M1519.6 834.2L1589.1 932.9M1483.6 751.2L1544.8 835.5M1543.5 833.7L1615.1 932.2M1505.9 750.7L1568.8 834.9M1567.5 833.1L1641.1 931.5M1528.1 750.2L1592.7 834.3M1591.4 832.5L1667.0 930.8M1550.3 749.7L1616.7 833.7M1572.4 749.2L1640.6 833.2M1594.6 748.7L1664.4 832.6"/>
<path stroke-width="1.8" d="M6.2 870.4L-57.2 976.1M31.9 869.8L-29.3 975.3M57.5 869.2L-1.3 974.6M83.1 868.6L26.6 973.9M134.2 867.4L82.4 972.4M159.7 866.8L110.2 971.7M185.2 866.2L138.0 970.9M210.6 865.5L165.7 970.2M236.1 864.9L193.5 969.5M261.5 864.3L221.1 968.8M286.8 863.7L248.8 968.0M337.5 862.5L304.0 966.6M362.8 861.9L331.5 965.9M388.0 861.3L359.0 965.1M413.2 860.7L386.5 964.4M438.4 860.1L414.0 963.7M463.6 859.5L441.4 963.0M488.7 858.9L468.8 962.3M538.9 857.7L523.4 960.8M564.0 857.1L550.7 960.1M589.0 856.5L577.9 959.4M614.0 855.9L605.2 958.7M639.0 855.3L632.3 958.0M663.9 854.7L659.5 957.3M688.8 854.1L686.6 956.6M738.6 852.9L740.7 955.1M763.4 852.3L767.7 954.4M788.2 851.7L794.7 953.7M813.0 851.1L821.7 953.0M837.7 850.6L848.6 952.3M862.5 850.0L875.5 951.6M887.1 849.4L902.3 950.9M936.4 848.2L955.9 949.5M961.1 847.6L982.7 948.8M982.2 946.6L1007.9 1066.8M985.6 847.0L1009.4 948.1M1008.9 945.9L1037.1 1066.0M1010.2 846.4L1036.1 947.4M1035.5 945.2L1066.2 1065.1M1034.7 845.8L1062.7 946.7M1062.1 944.5L1095.4 1064.3M1059.2 845.3L1089.3 946.0M1088.7 943.8L1124.5 1063.4M1083.7 844.7L1115.9 945.3M1115.2 943.2L1153.5 1062.6M1132.5 843.5L1169.0 943.9M1168.2 941.8L1211.5 1060.9M1156.9 842.9L1195.5 943.2M1194.7 941.1L1240.5 1060.1M1181.3 842.3L1222.0 942.5M1221.1 940.4L1269.4 1059.2M1205.6 841.8L1248.4 941.8M1247.5 939.7L1298.2 1058.4M1229.9 841.2L1274.8 941.1M1273.8 939.0L1327.1 1057.6M1254.2 840.6L1301.2 940.4M1300.2 938.3L1355.8 1056.7M1278.5 840.0L1327.5 939.7M1326.5 937.6L1384.6 1055.9M1326.9 838.9L1380.1 938.4M1378.9 936.3L1442.0 1054.3M1351.1 838.3L1406.3 937.7M1405.1 935.6L1470.6 1053.4M1375.2 837.7L1432.5 937.0M1431.3 934.9L1499.2 1052.6M1399.4 837.1L1458.7 936.3M1457.4 934.2L1527.8 1051.8M1423.5 836.5L1484.8 935.6M1483.5 933.5L1556.3 1050.9M1447.5 836.0L1511.0 934.9M1509.6 932.8L1584.8 1050.1M1471.6 835.4L1537.0 934.3M1535.6 932.2L1613.2 1049.3M1587.6 930.8L1670.0 1047.7M1613.6 930.1L1698.4 1046.8"/>
<path stroke-width="2.0" d="M-0.0 972.3L-70.1 1098.0M27.8 971.6L-39.5 1097.1M83.5 970.2L21.7 1095.3M111.3 969.4L52.2 1094.4M139.0 968.7L82.7 1093.6M166.7 968.0L113.2 1092.7M194.4 967.3L143.6 1091.8M222.0 966.5L174.0 1090.9M249.6 965.8L204.3 1090.0M304.7 964.4L264.8 1088.3M332.2 963.6L295.0 1087.4M359.7 962.9L325.2 1086.5M387.1 962.2L355.3 1085.7M414.5 961.5L385.4 1084.8M441.9 960.8L415.4 1083.9M469.2 960.1L445.4 1083.1M523.8 958.6L505.3 1081.3M551.0 957.9L535.2 1080.5M578.2 957.2L565.0 1079.6M605.3 956.5L594.8 1078.7M632.5 955.8L624.6 1077.9M659.6 955.1L654.3 1077.0M686.6 954.4L684.0 1076.2M740.7 953.0L743.2 1074.5M767.6 952.2L772.8 1073.6M794.6 951.5L802.3 1072.7M821.5 950.8L831.8 1071.9M848.3 950.1L861.2 1071.0M861.0 1068.5L876.5 1214.5M875.2 949.4L890.6 1070.2M890.3 1067.6L909.0 1213.4M902.0 948.7L920.0 1069.3M919.6 1066.8L941.4 1212.4M955.5 947.3L978.6 1067.7M978.1 1065.1L1006.0 1210.3M1007.3 1064.2L1038.3 1209.3M1036.5 1063.4L1070.5 1208.2M1065.6 1062.5L1102.7 1207.2M1094.7 1061.7L1134.8 1206.2M1123.7 1060.9L1166.9 1205.1M1152.7 1060.0L1198.9 1204.1M1210.6 1058.4L1262.8 1202.1M1239.5 1057.5L1294.7 1201.0M1268.3 1056.7L1326.5 1200.0M1297.1 1055.9L1358.3 1199.0M1325.9 1055.0L1390.0 1198.0M1354.6 1054.2L1421.7 1196.9M1383.3 1053.4L1453.4 1195.9M1440.6 1051.7L1516.6 1193.9M1469.2 1050.9L1548.1 1192.9M1497.8 1050.1L1579.6 1191.9M1526.3 1049.3L1611.0 1190.9M1554.7 1048.4L1642.4 1189.9M1583.2 1047.6L1673.7 1188.8M1611.6 1046.8L1705.0 1187.8"/>
<path stroke-width="2.2" d="M23.0 1092.6L-51.8 1244.4M53.5 1091.8L-18.0 1243.3M83.9 1090.9L15.8 1242.2M114.3 1090.0L49.5 1241.1M144.7 1089.1L83.2 1240.0M175.0 1088.2L116.8 1238.9M205.3 1087.4L150.4 1237.8M265.7 1085.6L217.4 1235.7M295.8 1084.8L250.8 1234.6M325.9 1083.9L284.2 1233.5M356.0 1083.0L317.5 1232.5M386.0 1082.2L350.8 1231.4M416.0 1081.3L384.0 1230.3M445.9 1080.4L417.2 1229.3M505.7 1078.7L483.4 1227.1M535.5 1077.8L516.4 1226.1M565.3 1077.0L549.4 1225.0M595.0 1076.1L582.3 1224.0M624.7 1075.3L615.2 1222.9M654.4 1074.4L648.0 1221.8M684.0 1073.6L680.8 1220.8M743.2 1071.9L746.2 1218.7M772.7 1071.0L778.9 1217.6M802.1 1070.1L811.5 1216.6M831.6 1069.3L844.0 1215.5M1133.9 1203.1L1183.3 1380.8M1165.9 1202.0L1219.0 1379.5M1197.9 1201.0L1254.7 1378.2M1261.7 1199.0L1325.8 1375.7M1293.5 1197.9L1361.3 1374.4M1325.3 1196.9L1396.8 1373.1M1357.0 1195.9L1432.2 1371.8M1388.7 1194.9L1467.5 1370.5M1420.3 1193.9L1502.7 1369.3M1451.9 1192.8L1538.0 1368.0M1514.9 1190.8L1608.2 1365.4M1546.4 1189.8L1643.2 1364.2M1577.8 1188.8L1678.2 1362.9M1609.2 1187.8L1713.2 1361.6"/>
<path stroke-width="2.4" d="M17.3 1238.9L-67.1 1426.1M50.9 1237.8L-29.3 1424.7M84.5 1236.7L8.4 1423.3M118.1 1235.7L46.1 1422.0M151.6 1234.6L83.7 1420.6M218.4 1232.4L158.7 1417.9M251.8 1231.4L196.1 1416.5M285.1 1230.3L233.5 1415.2M318.3 1229.2L270.8 1413.8M351.5 1228.2L308.0 1412.5M384.7 1227.1L345.2 1411.1M417.8 1226.0L382.3 1409.8M483.9 1223.9L456.3 1407.1M516.8 1222.9L493.2 1405.8M549.7 1221.8L530.1 1404.4M582.6 1220.8L566.9 1403.1M615.4 1219.7L603.6 1401.8M648.2 1218.6L640.3 1400.5M680.9 1217.6L676.9 1399.1M746.2 1215.5L750.0 1396.5M778.7 1214.5L786.4 1395.2M811.3 1213.4L822.8 1393.9M843.8 1212.4L859.1 1392.5M876.2 1211.3L895.4 1391.2M908.6 1210.3L931.6 1389.9M940.9 1209.3L967.7 1388.6M1005.4 1207.2L1039.8 1386.0M1037.6 1206.1L1075.8 1384.7M1069.8 1205.1L1111.7 1383.4M1101.9 1204.1L1147.5 1382.1"/>
<path stroke-width="1.0" d="M87.9 416.6L512.7 410.7M504.4 410.9L921.5 405.1M913.4 405.2L1322.8 399.5M83.2 422.1L511.2 416.1M502.9 416.2L923.0 410.3M914.8 410.4L1327.2 404.7M78.4 427.6L509.7 421.5M501.3 421.6L924.5 415.7M916.3 415.8L1331.7 409.9M73.6 433.2L508.1 427.0M499.7 427.1L926.1 421.1M917.8 421.2L1336.3 415.2M68.6 438.9L506.6 432.6M498.1 432.7L927.7 426.5M919.3 426.7L1340.9 420.6M496.4 438.4L929.3 432.1M920.9 432.2L1345.6 426.1M494.7 444.1L931.0 437.8M922.5 437.9L1350.4 431.6M925.7 449.5L1360.2 443.0M927.4 455.4L1365.2 448.8"/>
<path stroke-width="1.2" d="M63.7 444.6L505.0 438.3M58.6 450.5L503.4 444.0M48.2 462.5L500.1 455.8M491.3 455.9L934.3 449.3M42.9 468.7L498.4 461.8M489.5 462.0L936.0 455.3M37.5 474.9L496.6 468.0M487.7 468.1L937.8 461.3M929.0 461.4L1370.3 454.7M32.0 481.3L494.9 474.2M485.9 474.3L939.6 467.4M930.8 467.5L1375.4 460.7M26.4 487.7L493.1 480.5M484.1 480.6L941.4 473.6M932.5 473.7L1380.7 466.8M20.8 494.3L491.3 486.9M482.2 487.1L943.2 479.9M934.2 480.0L1386.0 473.0M15.0 500.9L489.5 493.5M480.3 493.6L945.1 486.3M936.0 486.5L1391.4 479.3M3.2 514.6L485.7 506.9M476.4 507.0L948.9 499.5M939.7 499.6L1402.5 492.2M-2.9 521.6L483.8 513.7M474.4 513.9L950.8 506.2M941.6 506.3L1408.2 498.8M-9.0 528.7L481.8 520.7M472.3 520.9L952.8 513.0M943.5 513.2L1414.0 505.5M-15.3 536.0L479.9 527.8M470.2 528.0L954.8 520.0M945.4 520.2L1419.8 512.3M-21.7 543.4L477.8 535.1M468.1 535.2L956.9 527.1M947.4 527.2L1425.8 519.3M-28.2 550.9L475.8 542.4M466.0 542.6L959.0 534.3M949.4 534.5L1431.9 526.3M-34.8 558.5L473.7 549.9M463.8 550.1L961.1 541.6M951.5 541.8L1438.0 533.5M-48.3 574.2L469.4 565.3M459.3 565.4L965.5 556.7M955.7 556.8L1450.7 548.3M457.0 573.3L967.7 564.4M957.8 564.6L1457.2 555.8M454.7 581.4L970.0 572.3M960.0 572.4L1463.9 563.5M962.3 580.5L1470.6 571.4M964.6 588.6L1477.5 579.4M966.9 596.9L1484.5 587.5"/>
<path stroke-width="1.4" d="M-55.3 582.3L467.1 573.2M-62.4 590.5L464.9 581.2M-69.7 598.9L462.6 589.4M452.3 589.6L972.4 580.3M-77.0 607.4L460.3 597.7M449.8 597.9L974.7 588.4M-84.5 616.1L457.9 606.2M447.4 606.4L977.1 596.7M-92.2 625.0L455.4 614.9M444.8 615.1L979.6 605.2M969.2 605.4L1491.6 595.8M-107.9 643.2L450.5 632.7M439.6 632.9L984.7 622.6M974.1 622.8L1506.2 612.8M-116.1 652.6L447.9 641.8M437.0 642.1L987.3 631.6M976.6 631.8L1513.8 621.6M-124.3 662.1L445.3 651.2M434.2 651.4L989.9 640.7M979.2 640.9L1521.4 630.5M-132.8 671.9L442.6 660.7M431.4 660.9L992.6 650.0M981.8 650.2L1529.3 639.6M-141.4 681.9L439.9 670.4M428.6 670.7L995.4 659.5M984.4 659.7L1537.2 648.9M-150.2 692.0L437.1 680.4M425.7 680.6L998.2 669.2M987.1 669.4L1545.4 658.3M-159.1 702.4L434.2 690.5M422.8 690.7L1001.1 679.1M989.9 679.3L1553.7 668.0M416.7 711.6L1007.0 699.5M995.6 699.7L1570.8 687.9M413.5 722.4L1010.0 710.0M998.5 710.2L1579.6 698.1M1001.5 720.9L1588.6 708.6M1004.6 731.9L1597.8 719.3M1007.7 743.1L1607.2 730.2"/>
<path stroke-width="1.6" d="M-177.6 723.8L428.4 711.4M-187.2 734.9L425.4 722.1M-197.0 746.2L422.3 733.1M410.3 733.4L1013.2 720.7M-206.9 757.7L419.1 744.4M407.0 744.6L1016.3 731.7M-217.1 769.5L415.9 755.9M403.7 756.1L1019.6 742.8M-227.6 781.6L412.6 767.6M400.2 767.9L1022.9 754.3M1010.9 754.5L1616.7 741.3M-238.2 793.9L409.3 779.6M396.7 779.9L1026.3 766.0M1014.1 766.2L1626.5 752.7M-260.3 819.4L402.3 804.4M389.5 804.7L1033.3 790.1M1020.9 790.4L1646.8 776.2M-271.7 832.6L398.7 817.3M385.7 817.6L1037.0 802.6M1024.4 802.9L1657.2 788.4M-283.4 846.2L395.0 830.4M381.9 830.7L1040.7 815.4M1027.9 815.7L1667.9 800.8M378.0 844.2L1044.5 828.5M1031.6 828.8L1678.9 813.6M374.0 857.9L1048.4 841.9M1035.3 842.2L1690.1 826.6M1039.2 855.9L1701.5 839.9M1043.1 869.9L1713.3 853.5"/>
<path stroke-width="1.8" d="M-295.3 860.0L391.2 843.8M-307.6 874.2L387.4 857.6M-320.2 888.7L383.4 871.7M369.8 872.1L1052.3 855.6M-333.0 903.6L379.4 886.2M365.6 886.5L1056.4 869.6M-359.8 934.5L371.0 916.2M356.9 916.5L1064.9 898.7M1051.2 899.1L1737.6 881.8M-373.6 950.6L366.6 931.7M352.3 932.1L1069.3 913.8M1055.4 914.2L1750.2 896.5M-387.9 967.1L362.1 947.7M347.7 948.1L1073.8 929.3M1059.8 929.7L1763.1 911.5M342.9 964.5L1078.4 945.2M1064.2 945.6L1776.4 926.9M338.0 981.3L1083.1 961.5M1068.7 961.9L1790.0 942.7M332.9 998.6L1088.0 978.2M1073.4 978.6L1803.9 958.9M1078.2 995.8L1818.2 975.6"/>
<path stroke-width="2.0" d="M-402.5 984.0L357.5 964.1M-417.5 1001.4L352.8 980.9M-432.9 1019.2L348.0 998.2M-448.8 1037.6L343.0 1015.9M327.7 1016.3L1093.0 995.4M-481.9 1075.8L332.6 1052.9M316.9 1053.3L1103.4 1031.2M1088.2 1031.6L1848.0 1010.2M-499.1 1095.8L327.2 1072.1M311.3 1072.6L1108.8 1049.8M1093.4 1050.2L1863.5 1028.2M-516.8 1116.3L321.7 1091.9M305.5 1092.4L1114.3 1068.9M1098.8 1069.4L1879.4 1046.7M299.6 1112.8L1120.1 1088.6M1104.3 1089.1L1895.8 1065.8M293.4 1133.8L1125.9 1108.9M1109.9 1109.4L1912.6 1085.3M1115.8 1130.3L1929.9 1105.5M1121.8 1151.8L1947.8 1126.2"/>
<path stroke-width="2.2" d="M-535.1 1137.4L316.0 1112.3M-554.0 1159.2L310.1 1133.3M-573.4 1181.7L304.0 1155.0M287.1 1155.5L1132.0 1129.8M-593.4 1204.8L297.8 1177.3M280.6 1177.8L1138.3 1151.3M267.0 1224.5L1151.3 1196.2M1134.3 1196.8L1985.1 1169.6M259.8 1249.0L1158.2 1219.8M1140.9 1220.3L2004.6 1192.3M252.5 1274.2L1165.2 1244.1M1147.7 1244.6L2024.7 1215.7M1154.7 1269.7L2045.4 1239.8M1161.9 1295.7L2066.9 1264.7"/>
<path stroke-width="2.4" d="M-635.3 1253.3L284.7 1223.9M-657.3 1278.8L277.8 1248.4M-680.0 1305.1L270.7 1273.6M-703.5 1332.2L263.4 1299.7M244.8 1300.3L1172.5 1269.1M-727.8 1360.3L255.9 1326.7M237.0 1327.3L1180.0 1295.0M228.8 1355.2L1187.8 1321.8M1169.4 1322.4L2089.0 1290.4M220.4 1384.1L1195.8 1349.5M1177.1 1350.1L2111.8 1317.0"/>
<path stroke-width="2.6" d="M-752.9 1389.4L248.0 1354.5M-778.9 1419.5L240.0 1383.4"/>
</g>
<g fill="none" stroke="#82c3e0" stroke-opacity="0.92">
<path stroke-width="1.2" d="M97.0 410.9L64.3 448.9M65.0 448.1L28.8 490.2M221.7 409.2L195.8 447.0M196.3 446.2L167.5 488.1M345.8 407.5L326.4 445.1M326.8 444.3L305.4 486.0M469.2 405.8L456.3 443.2M456.6 442.4L442.4 483.8M591.9 404.1L585.5 441.3M585.6 440.5L578.5 481.7M713.9 402.4L713.9 439.4M713.9 438.6L713.9 479.6M835.3 400.7L841.6 437.5M841.4 436.8L848.4 477.6M956.0 399.1L968.5 435.7M968.3 434.9L982.1 475.5M1076.0 397.4L1094.7 433.9M1094.3 433.1L1115.0 473.4M1114.6 472.6L1137.6 517.5M1195.4 395.8L1220.2 432.0M1219.7 431.3L1247.1 471.4M1246.6 470.6L1277.1 515.2M1314.2 394.1L1345.0 430.2M1344.4 429.5L1378.4 469.3M1377.7 468.5L1415.6 512.9"/>
<path stroke-width="1.4" d="M29.6 489.4L-10.8 536.4M168.1 487.2L136.0 534.0M136.7 533.0L100.7 585.5M305.8 485.1L281.9 531.6M282.4 530.6L255.5 582.7M442.7 483.0L426.8 529.2M427.1 528.2L409.4 580.0M578.7 480.9L570.8 526.8M571.0 525.9L562.1 577.3M562.3 576.3L552.3 634.4M713.9 478.8L713.9 524.4M713.9 523.5L713.8 574.7M713.8 573.6L713.8 631.3M848.3 476.7L856.0 522.1M855.9 521.2L864.5 572.0M864.4 571.0L874.2 628.3M981.8 474.6L997.3 519.8M996.9 518.8L1014.2 569.4M1013.9 568.3L1033.3 625.3M1137.1 516.5L1162.9 566.7M1162.3 565.7L1191.4 622.3M1276.4 514.2L1310.5 564.1M1309.8 563.1L1348.3 619.3M1414.8 512.0L1457.2 561.6M1456.3 560.5L1504.1 616.4"/>
<path stroke-width="1.6" d="M101.4 584.4L60.7 643.7M61.5 642.4L15.2 710.0M256.1 581.7L225.8 640.6M226.4 639.3L191.9 706.4M409.7 579.0L389.6 637.5M390.1 636.2L367.2 702.8M552.5 633.2L541.2 699.3M713.8 630.1L713.8 695.8M713.8 694.4L713.8 769.7M873.9 627.1L885.1 692.3M884.8 690.9L897.6 765.6M1032.9 624.1L1055.0 688.8M1054.6 687.5L1079.9 761.6M1190.8 621.1L1223.7 685.4M1223.0 684.0L1260.8 757.6M1347.5 618.2L1391.1 682.0M1390.2 680.6L1440.1 753.7M1503.1 615.2L1557.2 678.6M1556.1 677.3L1618.0 749.8"/>
<path stroke-width="1.8" d="M16.1 708.6L-37.2 786.2M192.6 705.0L152.9 782.0M153.8 780.4L107.7 869.9M367.7 701.4L341.4 777.9M342.0 776.3L311.5 865.0M541.4 697.9L528.4 773.8M528.6 772.2L513.5 860.2M713.8 768.1L713.7 855.4M897.3 764.1L912.1 850.6M1079.4 760.1L1108.7 845.9M1260.0 756.1L1303.6 841.2M1439.1 752.2L1496.8 836.6M1495.6 834.8L1563.1 933.6"/>
<path stroke-width="2.0" d="M108.7 868.0L54.5 973.1M312.2 863.1L276.4 967.3M513.9 858.3L496.1 961.5M713.7 853.5L713.7 955.8M911.8 848.8L929.1 950.2M1108.1 844.1L1142.5 944.6M1302.7 839.4L1353.8 939.1M1352.7 936.9L1413.3 1055.1M1561.7 931.5L1641.6 1048.5"/>
<path stroke-width="2.2" d="M55.7 970.9L-8.9 1096.2M277.2 965.1L234.6 1089.2M496.5 959.3L475.4 1082.2M713.7 953.7L713.6 1075.3M928.8 948.0L949.3 1068.5M1141.8 942.5L1182.5 1061.8M1412.0 1052.6L1485.0 1194.9"/>
<path stroke-width="2.4" d="M235.5 1086.5L183.9 1236.8M475.8 1079.6L450.3 1228.2M713.6 1072.7L713.6 1219.7M948.9 1065.9L973.7 1211.4M1181.7 1059.2L1230.9 1203.1"/>
<path stroke-width="2.6" d="M185.0 1233.5L121.3 1419.2M450.9 1225.0L419.3 1408.5M713.6 1216.5L713.5 1397.8M973.2 1208.2L1003.8 1387.3M1229.8 1200.0L1290.3 1376.9M1483.4 1191.8L1573.1 1366.7"/>
<path stroke-width="1.2" d="M92.5 411.3L514.2 405.5M506.0 405.6L920.0 399.9M911.9 400.0L1318.4 394.4M53.4 456.5L501.7 449.9M493.0 450.0L932.6 443.5M924.1 443.6L1355.3 437.3M937.9 493.0L1396.9 485.7"/>
<path stroke-width="1.4" d="M9.2 507.7L487.6 500.1M478.3 500.3L947.0 492.8M-41.5 566.3L471.5 557.5M461.6 557.7L963.3 549.1M953.6 549.3L1444.3 540.8M971.6 614.0L1498.8 604.2"/>
<path stroke-width="1.6" d="M-100.0 634.0L453.0 623.7M442.3 623.9L982.1 613.8M-168.3 713.0L431.3 700.8M419.7 701.1L1004.0 689.2M992.7 689.4L1562.1 677.8"/>
<path stroke-width="1.8" d="M-249.1 806.5L405.8 791.9M393.2 792.2L1029.8 777.9M1017.5 778.2L1636.6 764.3M1047.1 884.3L1725.3 867.5"/>
<path stroke-width="2.0" d="M-346.2 918.9L375.2 901.0M361.3 901.3L1060.6 884.0M1083.1 1013.4L1832.9 992.6"/>
<path stroke-width="2.2" d="M-465.1 1056.4L337.9 1034.1M322.4 1034.6L1098.1 1013.0"/>
<path stroke-width="2.4" d="M273.9 1200.8L1144.7 1173.4M1127.9 1173.9L1966.1 1147.6"/>
<path stroke-width="2.6" d="M-614.0 1228.7L291.3 1200.2M1185.1 1378.8L2135.4 1344.4"/>
<path stroke-width="2.8" d="M211.7 1414.0L1204.2 1378.1"/>
<path stroke-width="3.0" d="M-805.9 1450.7L231.6 1413.2"/>
</g>
<defs><filter id="lblur" x="-10%" y="-10%" width="120%" height="120%"><feGaussianBlur stdDeviation="1.3"/></filter></defs>
<g fill="#7dbbd9" fill-opacity=".55" font-family="Liberation Sans" font-weight="bold" font-size="100" filter="url(#lblur)">
<text transform="matrix(-0.1864 0.2271 -0.6487 0.0092 114.4 422.8)">W</text>
<text transform="matrix(-0.1956 0.2384 -0.6647 0.0097 96.7 444.3)">o</text>
<text transform="matrix(-0.2019 0.2460 -0.6754 0.0101 84.7 458.9)">r</text>
<text transform="matrix(-0.2081 0.2536 -0.6859 0.0104 76.9 468.5)">k</text>
<text transform="matrix(-0.2162 0.2635 -0.6993 0.0108 65.3 482.5)">p</text>
<text transform="matrix(-0.2227 0.2714 -0.7099 0.0112 52.1 498.7)">l</text>
<text transform="matrix(-0.2291 0.2791 -0.7201 0.0115 45.9 506.2)">a</text>
<text transform="matrix(-0.2384 0.2905 -0.7349 0.0120 33.2 521.7)">n</text>
<text transform="matrix(-0.2484 0.3026 -0.7502 0.0126 18.6 539.5)">e</text>
</g>
</g>
<!-- MODEL (page coords) -->
<defs>
 <radialGradient id="org" cx=".4" cy=".35" r=".75"><stop offset="0" stop-color="#f58a22"/><stop offset=".6" stop-color="#ee7f1c"/><stop offset="1" stop-color="#b95f14"/></radialGradient>
 <linearGradient id="pur" x1="0" y1="0" x2="0" y2="1"><stop offset="0" stop-color="#843c9c"/><stop offset=".5" stop-color="#773791"/><stop offset="1" stop-color="#5b2b72"/></linearGradient>
 <linearGradient id="archsh" x1="0" y1="0" x2="0" y2="1"><stop offset="0" stop-color="#7e8c9d" stop-opacity=".72"/><stop offset=".5" stop-color="#8493a4" stop-opacity=".62"/><stop offset="1" stop-color="#a9b6c4" stop-opacity=".12"/></linearGradient>
 <radialGradient id="gsh"><stop offset="0" stop-color="#5f6f80" stop-opacity=".5"/><stop offset="1" stop-color="#5f6f80" stop-opacity="0"/></radialGradient>
 <linearGradient id="seatg" gradientUnits="userSpaceOnUse" x1="0" y1="650" x2="0" y2="830"><stop offset="0" stop-color="#343879"/><stop offset=".4" stop-color="#333777"/><stop offset=".62" stop-color="#2c2f69"/><stop offset="1" stop-color="#2a2d66"/></linearGradient>
 <filter id="blur6" x="-20%" y="-20%" width="140%" height="140%"><feGaussianBlur stdDeviation="6"/></filter>
</defs>
<!-- ground shadows -->
<ellipse cx="455" cy="888" rx="46" ry="12" fill="url(#gsh)"/>
<ellipse cx="1140" cy="896" rx="40" ry="9" fill="url(#gsh)"/>
<!-- arch shadow area on ground -->
<path d="M866 1001 L880 930 L892 916 L1043 913 L1064 996Z" fill="url(#archsh)"/>
<!-- purple object -->
<path d="M1065.8 836.3 L1067.8 828.3 C1072.2 825.6 1080.0 817.8 1084.4 811.7 C1083.3 806.7 1083.9 802.2 1084.4 798.9 C1085.0 791.1 1086.1 782.2 1087.8 777.8 C1101.1 775.6 1123.3 775.3 1134.4 776.7 C1138.9 780.0 1142.8 786.7 1143.3 792.2 C1143.3 800.0 1141.7 807.8 1140.0 813.3 L1146.7 814.4 C1153.3 822.2 1159.4 831.1 1160.6 836.7 C1161.1 848.9 1159.4 865.6 1155.6 882.2 C1152.8 887.8 1146.7 891.1 1140.0 891.7 L1113.3 890.6 L1113.3 846.7 L1112.0 832.2Z" fill="url(#pur)" stroke="#3b5876" stroke-width="2.4" stroke-linejoin="round"/>
<path d="M1096.7 803.9 C1106.7 798.9 1120.0 797.2 1128.9 799.4 L1128.0 815.6 C1122.2 812.2 1113.3 812.8 1108.9 816.1 C1104.4 812.2 1100.0 808.9 1096.7 803.9Z" fill="#5d2c75"/>
<path d="M1086.7 797.8 C1101.1 786.1 1123.3 785.0 1136.1 792.2 M1093.9 807.2 C1104.4 797.2 1123.3 793.9 1133.9 797.2 L1132.8 813.3 M1075.0 825.0 C1086.7 821.7 1106.7 821.7 1117.8 822.2 C1128.9 821.7 1140.0 817.8 1146.7 814.4 M1084.4 798.9 C1087.8 802.2 1091.1 804.4 1093.9 807.2" fill="none" stroke="#3b5876" stroke-width="1.6" stroke-linecap="round"/>
<!-- orange sphere 1 -->
<circle cx="441.500" cy="845.500" r="43.200" fill="url(#org)" stroke="#3b5876" stroke-width="2.200"/>
<!-- interior base -->
<path d="M504 640 L1052 629 L1049 652.200 L1082.700 651.400 L1092.400 670.600 C1098 683 1102 692 1103.600 699.500 C1105.500 705 1105.500 720 1102 736.400 C1100 746 1098 754 1095.600 760.500 C1092 771 1088 780 1084.300 789.400 L1069.900 821.500 L1063.500 831.100 L1063 842 L548 848 L517 806 L510.500 780.500 L514.500 748.400Z" fill="#2a2d66"/>
<!-- seats lighter faces -->
<g fill="#333777">
 <path d="M720.0 638.3 L822.5 636.7 L820.0 643.3 L721.7 645.0Z"/>
 <path d="M655.0 639.2 L678.3 639.2 L673.3 685.0Z"/>
 <path d="M695.8 716.7 C696.7 708.3 703.3 703.0 713.3 702.5 L794.2 700.8 L795.0 726.7 L758.3 727.5 L760.0 766.7 L736.7 768.0 C723.3 769.2 713.3 770.8 701.7 775.0 L696.7 743.3Z"/>
 <path d="M760.0 748.3 L795.8 748.3 L799.2 768.3 L826.7 768.3 L824.2 788.3 C818.3 801.7 810.0 813.3 803.3 823.3 L804.2 838.3 L723.3 840.8 L719.2 825.0 L708.3 792.5 L762.5 790.0Z"/>
 <path d="M845.8 710.0 L865.0 708.3 L886.7 798.3 L876.7 836.7 L844.2 836.7 C848.3 823.3 850.8 808.3 851.7 793.3 C852.5 781.7 853.3 770.0 853.3 760.0 C852.5 743.3 850.0 726.7 845.8 710.0Z"/>
 <path d="M886.7 798.3 L895.8 836.7 L876.7 836.7Z"/>
 <path d="M822.5 636.7 L836.7 636.7 C836.7 653.3 835.0 668.3 833.3 680.0 C831.7 693.3 829.2 706.7 826.7 716.7 C820.0 733.3 810.0 750.0 800.8 763.3 L794.2 700.8 C805.0 688.3 815.0 673.3 820.0 656.7 C821.7 650.0 822.2 643.3 822.5 636.7Z" fill="#303372"/>
 <path d="M524.500 730 C525 715 532 707 545 706.600 L604 705.500 L622 752 L619.600 770 L540 774 C530 774.500 522 778 518.500 782Z"/>
 <path d="M546 817.500 L612 815 L624 790 L652 842 L548 846.500Z"/>
 <path d="M722 841.500 L898 836.500 L903 851 L724 855Z"/>
 <path d="M921 637 L985 635.500 L968 655 L925 656Z" opacity=".7"/>
 <path d="M924 657 L968 655.500 L993 718 L940 720Z"/>
 <path d="M954 770 L1025 768 L1040 834 L968 836Z"/>
 <path d="M1051.700 654.300 L1082.700 651.400 L1092.400 670.600 C1098 683 1102 692 1103.600 699.500 C1105.500 705 1105.500 720 1102 736.400 C1100 746 1098 754 1095.600 760.500 C1092 771 1088 780 1084.300 789.400 L1069.900 821.500 L1063.500 831.100 L1029.900 831 C1040 820 1047 808 1051.700 795.600 C1060 780 1066 765 1068 752 C1072 738 1073 722 1072 708.700 C1071 692 1069 680 1065.200 670.600 C1062 663 1057 658 1051.700 654.300Z" fill="url(#seatg)"/>
 <path d="M519 641 L580 640 L581 645 L523 646.500Z"/>
</g>
<!-- interior lines -->
<g fill="none" stroke="#3f6d86" stroke-width="1.600" stroke-linejoin="round" stroke-linecap="round">
 <path d="M645.0 636.7 L848.3 633.3"/>
 <path d="M650.0 638.3 L723.3 850.0 M653.3 638.3 L726.7 850.0"/>
 <path d="M720.0 638.3 L822.5 636.7 L820.0 643.3 L721.7 645.0Z"/>
 <path d="M655.0 639.2 L678.3 639.2 L673.3 685.0Z"/>
 <path d="M695.8 716.7 C696.7 708.3 703.3 703.0 713.3 702.5 L794.2 700.8 L795.0 726.7 L758.3 727.5 L760.0 766.7 L736.7 768.0 C723.3 769.2 713.3 770.8 701.7 775.0 L696.7 743.3Z"/>
 <path d="M760.0 748.3 L795.8 748.3 L799.2 768.3 L826.7 768.3 L824.2 788.3 C818.3 801.7 810.0 813.3 803.3 823.3 L804.2 838.3 L723.3 840.8 L719.2 825.0 L708.3 792.5 L762.5 790.0Z"/>
 <path d="M822.5 636.7 C822.2 643.3 821.7 650.0 820.0 656.7 C815.0 673.3 805.0 688.3 794.2 700.8 M836.7 636.7 C836.7 653.3 835.0 668.3 833.3 680.0 C831.7 693.3 829.2 706.7 826.7 716.7 C820.0 733.3 810.0 750.0 800.8 763.3"/>
 <path d="M795.0 726.7 L795.8 748.3 L760.0 748.3 M822.5 767.5 L825.0 788.3 M719.2 825.0 L763.3 822.5 L765.0 839.2 M803.3 823.3 L804.2 838.3"/>
 <path d="M845.8 710.0 L865.0 708.3 L886.7 798.3 L876.7 836.7 L844.2 836.7 C848.3 823.3 850.8 808.3 851.7 793.3 C852.5 781.7 853.3 770.0 853.3 760.0 C852.5 743.3 850.0 726.7 845.8 710.0Z"/>
 <path d="M843.3 708.3 L845.8 710.0 M886.7 798.3 L876.7 836.7 M844.2 836.7 L895.8 836.7 M848.3 633.3 L865.0 708.3 L895.8 836.7"/>
 <path d="M858.3 690.0 L860.8 703.3"/>
 <path d="M524.500 730 C525 715 532 707 545 706.600 L604 705.500 M518.500 782 C522 778 530 774.500 540 774 L619.600 770 L622 752 M517 778 L524.500 730"/>
 <path d="M546 817.500 L612 815 L632 781 M612 815 L611 842 M632 781 L628 842"/>
 <path d="M921 637 L985 635.500 L968 655 L925 656 M968 655 L993 718 L940 720 M993 718 C1010 700 1025 670 1030 636 M940 767 L1025 765 L1040 834 M1025 765 L1050 700 M1029.900 831 C1040 820 1047 808 1051.700 795.600 C1060 780 1066 765 1068 752 C1072 738 1073 722 1072 708.700 C1071 692 1069 680 1065.200 670.600 C1062 663 1057 658 1051.700 654.300 M1022 750 C1020 745 1025 735 1030 728"/>
 <path d="M519 641 L580 640 M523 646.500 L581 645"/>
 <path d="M504 640 L514.500 748.400 L510.500 780.500 L517 806"/>
 <path d="M1049 652.200 L1082.700 651.400 L1092.400 670.600 C1098 683 1102 692 1103.600 699.500 C1105.500 705 1105.500 720 1102 736.400 C1100 746 1098 754 1095.600 760.500 C1092 771 1088 780 1084.300 789.400 L1069.900 821.500 L1063.500 831.100" stroke-width="2"/>
</g>
<!-- pillars -->
<g fill="#2a2d66" stroke="#3f6d86" stroke-width="1.700" stroke-linejoin="round">
 <path d="M579.500 637.700 L646.900 636.800 L723.900 855.900 L659.700 859.900Z"/>
 <path d="M846.600 632.600 L913.100 631.200 L966.100 849.900 L903.600 854Z"/>
</g>
<!-- orange sphere 2 -->
<circle cx="514" cy="834.500" r="35" fill="url(#org)" stroke="#3b5876" stroke-width="2.200"/>
<!-- body -->
<path d="M454.700 791.500 L479.200 851.300 L480 846.600 L652.500 842.200 L660.500 859.100 L723.900 856 L722 841.500 L898 836.500 L903.600 854 L966.100 849.900 L964.400 834.200 L1112 832.200 L1115 846 L1098.500 992 L1060.700 994.200 L1041.900 917 L894.100 920.900 A100.800 100.800 0 0 0 874.200 999.400 L480.500 1008.900 L461.500 871.700Z" fill="#2a2d66" stroke="#3f6d86" stroke-width="2" stroke-linejoin="round"/>
<g fill="#333777" stroke="#3f6d86" stroke-width="1.200" stroke-linejoin="round">
 <path d="M480 846.600 L652.500 842.200 L660.500 859.100 L477.800 862.200 L479.200 851.300Z"/>
 <path d="M722 841.500 L898 836.500 L903.600 854 L723.900 856Z"/>
 <path d="M964.400 834.200 L1112 832.200 L1115 846 L966.100 849.900Z"/>
</g>
<path d="M454.700 791.500 L479.200 851.300 L477.800 862.200 L461.500 871.700Z" fill="#252860"/>
<!-- arch inner wall -->
<path d="M1041.900 917 L1043.200 908 A100.800 100.800 0 0 1 1065.200 943 L1063.900 989.600 L1060.700 994.200Z" fill="#2a2d66" stroke="#3f6d86" stroke-width="1.300" stroke-linejoin="round"/>
<path d="M874.200 999.400 A100.800 100.800 0 0 1 1065.200 943" fill="none" stroke="#3f6d86" stroke-width="1.500"/>
<path d="M866.500 944 C862.500 951 860.500 960 859.500 967 M1076.500 935 C1081 941 1082.500 951 1082 961" fill="none" stroke="#3f6d86" stroke-width="1.500" stroke-linecap="round"/>
<!-- wheel -->
<g stroke="#3f6d86" stroke-width="1.300" stroke-linejoin="round">
 <path d="M912.200 919.500 L914.800 924.800 C917 928.500 919.500 930 922.600 930.700 L933 930.700 L933 919.200Z" fill="#2a2d66"/>
 <path d="M987.400 927.400 C992.500 925 995.500 921.500 996.500 918.300 L996.300 918.800 L986 919Z" fill="#2a2d66"/>
 <path d="M926.500 933.900 C925.500 942 926 950 927.800 955.900 C930.500 963 935 968 940.700 971.500 L955 976.700 L961.500 968.900 L957.600 937.800 L953.700 932.600 C945 931 934 931.500 926.500 933.900Z" fill="#2d3070"/>
 <path d="M979.600 932.600 L1000.400 932.600 C1001.500 939 1001.500 945 1000.400 950.700 C998.500 957.500 995 962.500 990 966.300 L973.200 975.400 L964.100 968.900 L966 940Z" fill="#2a2d66"/>
 <path d="M933 919 L933 930.700 L953.700 932.600 L950.500 919Z" fill="#333777"/>
 <path d="M966.700 919 L964.100 924.800 L974.400 963.700 L979.600 950.700 L984.800 922.200 L983 919Z" fill="#2a2d66"/>
 <path d="M960.200 923.500 L966.700 923.500 L974.400 963.700 L966.700 963.700Z" fill="#333777"/>
</g>
<path d="M940 957 C940 948 944 941 950 936 M985 937 C989 944 990 952 988 958 M957.600 937.800 L955 976.700" fill="none" stroke="#3f6d86" stroke-width="1.200"/>
<g fill="none" stroke="#3f6d86" stroke-width="1.300">
 <path d="M910.900 909.300 L912.200 919.500 M933 902.800 L945.900 892.400 L951 919 M933 902.800 L933 919 M966.700 892.400 C975 900 981 910 984.800 922.200 M966.700 892.400 C963 905 963 915 964.100 924.800 M999.100 888.500 C1001.500 893 1002 898 1001.700 902.800 C1001 909 999 914 996.500 918.300"/>
</g>
<path d="M933 902.800 L945.900 892.400 L951 919 L933 919Z" fill="#333777" opacity=".55"/>
<!-- roof -->
<path d="M418 570.400 L1154.500 557.200 L1156 575 L1130.600 739 L1110.500 628 L424.800 642.600Z" fill="#2a2d66" stroke="#3f6d86" stroke-width="1.800" stroke-linejoin="round"/>
<path d="M414.900 532.900 L1152.600 518.400 L1154.500 557.200 L418 570.400Z" fill="#333777" stroke="#3f6d86" stroke-width="1.800" stroke-linejoin="round"/>
<path d="M472.300 368.500 L1070.200 360.100 L1152.600 518.400 L414.900 532.900Z" fill="#323675" stroke="#3f6d86" stroke-width="1.800" stroke-linejoin="round"/>
<path d="M507.200 389.400 L1012.100 382.900 L1069.100 516.500 L468.100 526.800Z" fill="none" stroke="#3f6d86" stroke-width="1.600"/>
<path d="M1107.400 627.200 L1112.700 627.400 L1129 736" fill="none" stroke="#3f6d86" stroke-width="1.100"/>
<!-- pillar merge overlays -->
<g fill="#2a2d66">
 <path d="M580.500 628 L647.500 627 L652.500 650 L586 651Z"/>
 <path d="M847.500 623 L913.500 621.500 L918.500 650 L852.500 651Z"/>
 <path d="M654.500 842 L719.500 838 L727 872 L662 874Z"/>
 <path d="M899.500 835 L962.500 831 L970 866 L907 868Z"/>
</g>
<g fill="none" stroke="#3f6d86" stroke-width="1.700" stroke-linecap="round">
 <path d="M579.500 637.700 L659.700 859.900 M646.900 636.800 L723.900 855.900 M846.600 632.600 L903.600 854 M913.100 631.200 L966.100 849.900"/>
</g>
</g></svg>
<!-- canvas overlay controls (page coords) -->
<svg class="abs" style="left:0;top:234px" width="1608" height="1386" viewBox="0 234 1608 1386">
 <defs>
  <linearGradient id="cubeR" x1="0" y1="0" x2="0" y2="1"><stop offset="0" stop-color="#fdfdfd" stop-opacity=".96"/><stop offset=".55" stop-color="#f4f4f5" stop-opacity=".9"/><stop offset=".78" stop-color="#eeeef0" stop-opacity=".62"/><stop offset="1" stop-color="#e4e4e8" stop-opacity=".34"/></linearGradient>
  <radialGradient id="bigc" cx=".6" cy=".62" r=".62"><stop offset="0" stop-color="#ffffff"/><stop offset=".65" stop-color="#fafbfc"/><stop offset="1" stop-color="#f3f6f9"/></radialGradient><linearGradient id="ringg" x1="0" y1="0" x2="1" y2="1"><stop offset="0" stop-color="#f4f7fa" stop-opacity=".3"/><stop offset=".5" stop-color="#eef1f6" stop-opacity=".8"/><stop offset="1" stop-color="#d9dfe9"/></linearGradient>
 </defs>
 <!-- view cube -->
 <g>
  <path d="M72 291 L173.500 287 L193.500 343.500 L63.500 347.500Z" fill="#fefefe" stroke="#c6c6c6" stroke-width="1.500" stroke-linejoin="round"/>
  <path d="M63.500 347.500 L193.500 343.500 L184.500 436 L77 440Z" fill="url(#cubeR)" stroke="#c6c6c6" stroke-width="1.500" stroke-linejoin="round"/>
  <path d="M77 436 L184.500 432 L184.500 438 L77 443Z" fill="#b9bcc0" fill-opacity=".55"/>
  <text transform="translate(129,403) " text-anchor="middle" font-family="Liberation Sans" font-weight="bold" font-size="23.500" fill="#a7a7b0" letter-spacing=".3">RIGHT</text>
  <text transform="translate(114.800,313.500) rotate(91) skewX(-4) scale(.36,1)" text-anchor="middle" font-family="Liberation Sans" font-weight="bold" font-size="33" fill="#adadb5">TOP</text>
 </g>
 <!-- round buttons -->
 <g fill="#ffffff" fill-opacity=".55" stroke="#8d8d8d" stroke-width="1.500">
  <circle cx="61.700" cy="536" r="40.500"/><circle cx="61.700" cy="640" r="40.500"/><circle cx="61.700" cy="744" r="40.500"/><circle cx="61.700" cy="848" r="40.500"/><circle cx="61.700" cy="952" r="40.500"/>
 </g>
 <g fill="none" stroke="#a6a6a6" stroke-width="2.600">
  <path d="M43 538 L61.600 517.200 L80.500 538 M49.800 536 V553.600 H57.400 V540.400 H66.400 V553.600 H74.300 V536" stroke-width="2.600" stroke-linejoin="miter"/>
  <path d="M44.500 633 V623 H55 M68.500 623 H79.500 V633 M79.500 646.500 V657 H68.500 M55 657 H44.500 V646.500" stroke-width="2.800"/>
  <path d="M46.500 744 H77.500 M62 728.500 V759.500" stroke-width="4.400" stroke-linecap="round"/>
  <path d="M45 848 H79" stroke-width="4.400" stroke-linecap="round"/>
  <path d="M47.500 944 L61 932.500 L74 941.500 L74 956 M47.500 944 L60.500 951.500 L74 941.500 M47.500 944 V957 M60.500 951.500 V971 M38.500 953 L60.500 971 L84 952.500" stroke-width="2.400" stroke-linejoin="round" stroke-linecap="round"/>
 </g>
 <!-- big circle -->
 <circle cx="119.300" cy="1500" r="98.600" fill="#fbfcfd" fill-opacity=".86" stroke="#a3cde6" stroke-width="1.600"/>
 <circle cx="119.300" cy="1500" r="92.500" fill="none" stroke="url(#ringg)" stroke-width="10.500"/>
 <circle cx="119.300" cy="1500" r="87.500" fill="url(#bigc)"/>
</svg>
<!-- side tab -->
<div class="abs" style="left:1572px;top:865px;width:48px;height:124px;background:#f4f5f8;border:2px solid #dde1e8;border-right:none"></div>
<svg class="abs" style="left:1580px;top:895px" width="36" height="66" viewBox="1580 895 36 66"><path d="M1592 902 L1605.600 927.600 L1592 952.300" fill="none" stroke="#000" stroke-width="3.600" stroke-linejoin="miter"/></svg>
<!-- settings / snap -->
<div class="abs" style="left:1408px;top:1454.500px;width:179.500px;height:63px;background:#fdfdfd;border:2px solid #dfe4ea;border-radius:7px"></div>
<div class="abs" id="settings" style="left:1435.7px;top:1465px;font-size:31.500px;line-height:40px;color:#64798d;white-space:nowrap;letter-spacing:1.46px">Settings</div>
<div class="abs" id="snap" style="left:1220.4px;top:1546.500px;font-size:31.500px;line-height:40px;color:#33475b;white-space:nowrap;letter-spacing:.21px">Snap Grid</div>
<div class="abs" style="left:1394.500px;top:1538.500px;width:193px;height:59px;background:#fdfdfd;border:2px solid #dfe4ea;border-radius:5px"></div>
<div class="abs" id="snapv" style="left:1412.5px;top:1548.500px;font-size:31.500px;line-height:40px;color:#59605f;white-space:nowrap;letter-spacing:.88px">1/8 in</div>
<svg class="abs" style="left:1550px;top:1560px" width="26" height="18" viewBox="1550 1560 26 18"><path d="M1557.400 1572.300 H1568.800 L1563.100 1565.400Z" fill="#444"/></svg>
<!-- panel top icons (page coords) -->
<svg class="abs" style="left:1608px;top:234px" width="552" height="140" viewBox="1608 234 552 140">
 <g fill="none" stroke="#0a8bc4" stroke-linejoin="miter">
  <path stroke-width="4" d="M1660.400 271.700 L1735.900 265.800 L1734.900 346 L1664.200 339.900Z"/>
  <g stroke-width="1.700">
   <path d="M1672.900 270.700 L1676 340.900 M1685.500 269.700 L1687.800 341.900 M1710.600 267.800 L1711.400 344 M1723.200 266.800 L1723.100 345"/>
   <path d="M1661 283.100 L1735.700 279.200 M1661.700 294.400 L1735.600 292.500 M1662.900 317.100 L1735.300 319.300 M1663.500 328.500 L1735.100 332.600"/>
  </g>
  <path stroke-width="2.600" d="M1698.100 268.700 L1699.600 343 M1662.300 305.800 L1735.400 305.900"/>
  <!-- ruler -->
  <path stroke-width="3.800" d="M1845.100 271.300 L1861.800 270.900 L1865.400 325 L1923.600 328.200 L1923 347.100 L1850.600 340.300Z"/>
  <g stroke-width="2"><path d="M1856 284 H1861.800 M1853.500 296.900 H1861.800 M1857.400 310.300 H1863.200 M1856 324.600 H1866 M1866 326.800 V335.700 M1878.200 327.500 V333.200 M1893.300 328.200 V337.500 M1908.400 328.900 V334.700"/></g>
  <!-- notes -->
  <path stroke-width="4" stroke-linejoin="round" d="M2046 268.300 L2090 266.800 C2095.500 266.600 2097.500 270 2097.300 274.500 L2095.800 323 C2095.600 328.500 2092.500 330.800 2088 330.800 L2076.500 330.800 L2064.300 346.500 L2052.500 329.500 L2046.500 329.300 C2041 329.200 2038.400 326 2038.300 321 L2037.600 277 C2037.500 271.500 2040.500 268.500 2046 268.300Z"/>
  <g stroke-width="2.200" stroke-linecap="round"><path d="M2053.400 286.300 L2080.500 285.600 M2053.400 295.600 L2080.500 296.500 M2053.400 304.300 L2080.500 305.800 M2053.400 312.400 L2071 314"/></g>
 </g>
</svg>
<!-- dropdown + search -->
<div class="abs" style="left:1629.3px;top:389px;width:413px;height:91px;background:#f4f5f8;border:1.500px solid #e2e5ec;border-radius:6px;box-shadow:0 3px 6px rgba(120,130,160,.18)"></div>
<div class="abs" style="left:2047.8px;top:389px;width:91px;height:91px;background:#f4f5f8;border:1.500px solid #e2e5ec;border-radius:6px;box-shadow:0 3px 6px rgba(120,130,160,.18)"></div>
<div class="abs" id="bs" style="left:1652px;top:414.300px;font-size:29px;line-height:40px;color:#33475b;white-space:nowrap;letter-spacing:.37px">Basic Shapes</div>
<svg class="abs" style="left:2000px;top:415px" width="30" height="40" viewBox="2000 415 30 40"><path d="M2007.800 430.400 H2022.600 L2015.200 421.700Z M2007.800 440.600 H2022.600 L2015.200 449.300Z" fill="#111"/></svg>
<svg class="abs" style="left:2060px;top:405px" width="64" height="60" viewBox="2060 405 64 60"><circle cx="2089.500" cy="431.700" r="17.200" fill="none" stroke="#000" stroke-width="4.400"/><path d="M2101.700 443.900 L2113.500 455.500" stroke="#000" stroke-width="4.600" stroke-linecap="round"/></svg>
<!-- cards -->
<div class="card" style="left:1628px;top:502px"></div>
<div class="card" style="left:1802px;top:502px"></div>
<div class="card" style="left:1976px;top:502px"></div>
<div class="card" style="left:1628px;top:700px"></div>
<div class="card" style="left:1802px;top:700px"></div>
<div class="card" style="left:1976px;top:700px"></div>
<div class="card" style="left:1628px;top:908px"></div>
<div class="card" style="left:1802px;top:908px"></div>
<div class="card" style="left:1976px;top:908px"></div>
<div class="card" style="left:1628px;top:1116px"></div>
<div class="card" style="left:1802px;top:1116px"></div>
<div class="card" style="left:1976px;top:1116px"></div>
<div class="card" style="left:1628px;top:1324px"></div>
<div class="card" style="left:1802px;top:1324px"></div>
<div class="card" style="left:1976px;top:1324px"></div>
<div class="card" style="left:1628px;top:1532px"></div>
<div class="card" style="left:1802px;top:1532px"></div>
<div class="card" style="left:1976px;top:1532px"></div>
<svg class="abs" style="left:1608px;top:490px" width="552" height="1130" viewBox="1608 490 552 1130">
<defs>
<pattern id="stripe" width="19" height="19" patternUnits="userSpaceOnUse" patternTransform="rotate(40)"><rect width="19" height="19" fill="#fff" fill-opacity="0"/><rect width="19" height="9" fill="#000" fill-opacity=".1"/></pattern>
<radialGradient id="shd"><stop offset="0" stop-color="#b9bcc6" stop-opacity=".55"/><stop offset=".55" stop-color="#c9ccd4" stop-opacity=".28"/><stop offset="1" stop-color="#f5f6f9" stop-opacity="0"/></radialGradient>
<linearGradient id="gcyl" x1="0" x2="1"><stop offset="0" stop-color="#8e939e"/><stop offset=".3" stop-color="#a9aeb9"/><stop offset=".7" stop-color="#c3c8d3"/><stop offset="1" stop-color="#bcc1cc"/></linearGradient>
<linearGradient id="ocyl" x1="0" x2="1"><stop offset="0" stop-color="#86460f"/><stop offset=".35" stop-color="#b46116"/><stop offset=".75" stop-color="#dc7a1e"/><stop offset="1" stop-color="#cf711b"/></linearGradient>
<radialGradient id="sph" cx=".68" cy=".3" r=".8"><stop offset="0" stop-color="#10a8e0"/><stop offset=".55" stop-color="#0c93c8"/><stop offset="1" stop-color="#086e98"/></radialGradient>
<linearGradient id="cone" x1="0" x2="1"><stop offset="0" stop-color="#4f2466"/><stop offset=".4" stop-color="#7a3994"/><stop offset=".75" stop-color="#83409f"/><stop offset="1" stop-color="#5c2a74"/></linearGradient>
<radialGradient id="dome" cx=".68" cy=".35" r=".8"><stop offset="0" stop-color="#e3129a"/><stop offset=".6" stop-color="#c90e84"/><stop offset="1" stop-color="#9a0a64"/></radialGradient>
<linearGradient id="para" x1="0" x2="1"><stop offset="0" stop-color="#8f9294"/><stop offset=".3" stop-color="#c9cccd"/><stop offset=".65" stop-color="#e6e9ea"/><stop offset="1" stop-color="#d2d5d7"/></linearGradient>
<linearGradient id="rroof" x1="0" x2="1" y1="0" y2=".6"><stop offset="0" stop-color="#4e98a6"/><stop offset=".5" stop-color="#6cc5d5"/><stop offset="1" stop-color="#74cfde"/></linearGradient>
</defs>
<ellipse cx="1882" cy="590" rx="64" ry="62" fill="url(#shd)"/>
<ellipse cx="1708" cy="788" rx="64" ry="62" fill="url(#shd)"/>
<ellipse cx="1882" cy="788" rx="64" ry="62" fill="url(#shd)"/>
<ellipse cx="2056" cy="788" rx="64" ry="62" fill="url(#shd)"/>
<ellipse cx="1708" cy="996" rx="64" ry="62" fill="url(#shd)"/>
<ellipse cx="1882" cy="996" rx="64" ry="62" fill="url(#shd)"/>
<ellipse cx="2056" cy="996" rx="64" ry="62" fill="url(#shd)"/>
<ellipse cx="1708" cy="1204" rx="64" ry="62" fill="url(#shd)"/>
<ellipse cx="1882" cy="1204" rx="64" ry="62" fill="url(#shd)"/>
<ellipse cx="2056" cy="1204" rx="64" ry="62" fill="url(#shd)"/>
<ellipse cx="1708" cy="1412" rx="64" ry="62" fill="url(#shd)"/>
<ellipse cx="1882" cy="1412" rx="64" ry="62" fill="url(#shd)"/>
<ellipse cx="2056" cy="1412" rx="64" ry="62" fill="url(#shd)"/>
<polygon points="1687.5,538.8 1758.2,549.1 1738.3,585.9 1656.8,573.1" fill="#d3d8e2" />
<polygon points="1656.8,573.1 1738.3,585.9 1735.3,654.6 1661.2,639.9" fill="#b4b9c4" />
<polygon points="1738.3,585.9 1758.2,549.1 1754.5,609.2 1735.3,654.6" fill="#c7ccd7" />
<polygon points="1687.5,538.8 1758.2,549.1 1754.5,609.2 1735.3,654.6 1661.2,639.9 1656.8,573.1" fill="url(#stripe)" />
<polygon points="1687.5,538.8 1758.2,549.1 1754.5,609.2 1735.3,654.6 1661.2,639.9 1656.8,573.1" fill="none" stroke="#6f747c" stroke-width="1.8" stroke-linejoin="round" />
<polyline points="1656.8,573.1 1738.3,585.9 1758.2,549.1" fill="none" stroke="#8a8f98" stroke-width="1"/>
<polyline points="1738.3,585.9 1735.3,654.6" fill="none" stroke="#8a8f98" stroke-width="1"/>
<path d="M1844.0 561.3 L1847.0 628.8 A36.8 17.7 0 0 0 1920.6 628.8 L1925.0 561.3 A40.5 19.1 0 0 0 1844.0 561.3Z" fill="url(#gcyl)"/>
<ellipse cx="1884.5" cy="561.3" rx="40.5" ry="19.1" fill="#d1d6e0"/>
<path d="M1844.0 561.3 L1847.0 628.8 A36.8 17.7 0 0 0 1920.6 628.8 L1925.0 561.3 A40.5 19.1 0 0 0 1844.0 561.3Z" fill="url(#stripe)" stroke="#777c85" stroke-width="1.6"/>
<path d="M1844.0 561.3 A40.5 19.1 0 0 0 1925.0 561.3" fill="none" stroke="#8a8f98" stroke-width="1"/>
<polygon points="2034.7,538.8 2106.4,549.1 2085.0,585.9 2004.0,573.1" fill="#cb1a2a" />
<polygon points="2004.0,573.1 2085.0,585.9 2083.8,654.6 2009.0,639.9" fill="#aa1521" />
<polygon points="2085.0,585.9 2106.4,549.1 2102.2,609.2 2083.8,654.6" fill="#bf1827" />
<polygon points="2034.7,538.8 2106.4,549.1 2102.2,609.2 2083.8,654.6 2009.0,639.9 2004.0,573.1" fill="none" stroke="#8b0f1a" stroke-width="1.8" stroke-linejoin="round" />
<polyline points="2004.0,573.1 2085.0,585.9 2106.4,549.1" fill="none" stroke="#8b0f1a" stroke-width=".9"/>
<polyline points="2085.0,585.9 2083.8,654.6" fill="none" stroke="#8b0f1a" stroke-width=".9"/>
<path d="M1669.1 759.3 L1672.8 827.6 A36.8 17.7 0 0 0 1746.4 827.6 L1750.1 759.3 A40.5 19.1 0 0 0 1669.1 759.3Z" fill="url(#ocyl)" stroke="#7c3f0d" stroke-width="1.6"/>
<ellipse cx="1709.6" cy="759.3" rx="40.5" ry="19.1" fill="#d4731c" stroke="#7c3f0d" stroke-width="1.1"/>
<circle cx="1883.8" cy="791.7" r="39.2" fill="url(#sph)" stroke="#0a5f84" stroke-width="1"/>
<path d="M2018.6 791.3 L2021.0 823.9 C2023.6 826.0 2027.8 826.0 2029.9 824.4 L2030.4 815.5 L2033.0 823.9 C2035.1 830.2 2040.4 834.9 2046.7 836.5 C2049.8 836.5 2052.5 834.9 2053.5 832.3 L2054.0 817.6 C2057.2 826.0 2063.5 834.4 2074.0 841.2 C2078.2 843.8 2081.3 845.9 2084.5 846.4 C2087.1 846.4 2088.7 845.4 2089.2 843.8 L2090.6 809.2 L2084.5 812.3 L2074.0 805.0 L2058.2 788.2 L2053.0 784.0 L2051.9 798.7 L2048.8 803.4 L2040.4 801.8 L2032.0 792.4 L2028.8 788.2 L2022.5 793.4 Z" fill="#7d9fba" stroke="#6f90ab" stroke-width=".8" stroke-linejoin="round"/>
<path d="M2030.4 794.5 L2030.4 815.5 L2033.0 823.9 L2033.2 798.7Z M2053.0 802.9 L2053.5 832.3 L2054.2 817.6 L2057.2 805.0Z" fill="#6f8fa9"/>
<path d="M2033.0 797.6 C2036.2 802.9 2042.5 805.0 2048.8 803.9 L2053.0 802.9 L2053.5 832.3 C2052.5 834.9 2049.8 836.5 2046.7 836.5 C2040.4 834.9 2035.1 830.2 2033.0 823.9Z" fill="#86abc8"/>
<path d="M2018.3 791.3 C2017.8 785.0 2021.5 779.2 2026.7 778.2 C2030.9 777.7 2035.1 779.8 2037.8 782.9 C2038.8 777.7 2042.5 770.3 2046.7 768.2 C2050.9 767.2 2055.6 770.9 2058.2 775.6 C2062.4 782.9 2065.6 788.2 2068.7 791.3 C2069.2 784.0 2070.3 775.6 2074.0 767.2 C2075.5 764.0 2077.6 763.0 2079.2 763.0 C2081.8 763.0 2083.4 764.0 2082.9 765.6 C2081.3 768.2 2079.7 772.4 2079.2 775.6 C2078.7 779.8 2079.2 784.0 2082.4 792.4 C2084.5 796.6 2088.7 801.8 2090.8 808.1 C2090.8 811.3 2089.7 812.8 2088.1 813.6 C2086.0 813.9 2083.9 813.2 2082.4 812.3 C2079.2 810.2 2076.1 808.1 2074.0 806.0 C2067.7 799.7 2062.4 794.5 2058.2 789.2 C2055.1 784.0 2052.5 779.8 2049.8 775.6 C2048.3 775.0 2047.5 776.1 2047.2 777.7 C2047.7 782.9 2049.3 789.2 2050.9 794.5 C2051.7 798.7 2051.7 800.8 2051.4 801.8 C2049.8 803.9 2048.3 804.4 2046.7 804.4 C2044.1 804.4 2042.0 803.9 2040.4 802.9 C2036.2 799.7 2032.5 794.5 2030.9 790.3 C2030.4 788.2 2029.9 786.1 2029.4 785.0 C2028.3 785.2 2027.8 786.1 2027.8 787.1 C2027.8 789.2 2027.6 791.1 2027.3 792.4 C2026.2 793.9 2024.1 794.7 2022.5 794.5 C2020.4 793.9 2018.9 792.9 2018.3 791.3Z" fill="#9dc6e3" stroke="#7fa3c0" stroke-width=".9" stroke-linejoin="round"/>
<path d="M2084.5 779.8 L2085.0 794.5 L2090.2 803.9 L2092.0 777.9Z" fill="#86abc8"/>
<path d="M2083.4 769.3 C2085.0 768.2 2089.7 767.7 2092.0 768.4 C2092.7 771.4 2092.7 775.6 2092.0 777.9 C2089.7 779.8 2086.6 780.3 2084.5 779.8 C2083.2 776.6 2082.9 772.4 2083.4 769.3Z" fill="#9dc6e3" stroke="#7fa3c0" stroke-width=".8"/>
<polygon points="1720.6,965.6 1698.5,1004.2 1660.5,1029.9 1687.5,990.7" fill="#28782c" />
<polygon points="1698.5,1004.2 1660.5,1029.9 1735.3,1044.7" fill="#2f8a34" />
<polygon points="1720.6,965.6 1755.0,1002.9 1735.3,1044.7 1698.5,1004.2" fill="#44b449" />
<polygon points="1720.6,965.6 1755.0,1002.9 1735.3,1044.7 1660.5,1029.9 1687.5,990.7" fill="none" stroke="#1f6a24" stroke-width="1.6" stroke-linejoin="round" />
<path d="M1883.8 964.9 L1846.5 1029.6 A37.3 20.1 0 0 0 1921.1 1029.6Z" fill="url(#cone)" stroke="#47205c" stroke-width="1.4" stroke-linejoin="round"/>
<path d="M2009.0 1027.5 C2010.2 1014.0 2027.4 987.0 2044.5 972.3 C2056.8 962.4 2086.3 962.4 2098.5 982.1 C2104.7 991.9 2104.7 1001.7 2102.2 1006.6 L2083.8 1044.7 Z" fill="url(#rroof)" stroke="#3f8794" stroke-width="1.6" stroke-linejoin="round"/>
<path d="M2009.0 1027.5 C2010.2 1014.0 2022.5 1002.9 2039.6 1002.9 C2061.7 1002.9 2081.3 1021.3 2083.8 1044.7 Z" fill="#5498a4" stroke="#3f8794" stroke-width="1.2" stroke-linejoin="round"/>
<g transform="translate(1712.5,1209) rotate(10.5) skewX(-9)"><g font-family="Liberation Sans" font-weight="bold" font-size="50" text-anchor="middle"><text x="0" y="24" fill="#9e111c" stroke="#9e111c" stroke-width="4" stroke-linejoin="round" transform="scale(.72,.92)">TEXT</text><text x="0" y="20" fill="#b31621" stroke="#b31621" stroke-width="3.5" stroke-linejoin="round" transform="scale(.72,.92)">TEXT</text><text x="-1.5" y="13" fill="#da1c2c" stroke="#da1c2c" stroke-width="2.2" stroke-linejoin="round" transform="scale(.72,.92)">TEXT</text></g></g>
<polygon points="1829.8,1185.2 1912.0,1198.7 1910.8,1268.6 1836.0,1252.7" fill="#2c3c7a" stroke="#1f2c60" stroke-width="1.6" stroke-linejoin="round" />
<polygon points="1912.0,1198.7 1928.7,1225.7 1910.8,1268.6" fill="#2f4888" stroke="#1f2c60" stroke-width="1.4" stroke-linejoin="round" />
<polygon points="2058.0,1173.6 2010.2,1252.7 2083.8,1268.6" fill="#e0c31a" />
<polygon points="2058.0,1173.6 2083.8,1268.6 2102.2,1225.7" fill="#f3d61d" />
<polygon points="2058.0,1173.6 2010.2,1252.7 2083.8,1268.6 2102.2,1225.7" fill="none" stroke="#8c7c0a" stroke-width="2.2" stroke-linejoin="round" />
<polyline points="2058.0,1173.6 2083.8,1268.6" fill="none" stroke="#8c7c0a" stroke-width=".9"/>
<path d="M1672.0 1434.3 C1672.0 1379.3 1747.6 1379.3 1747.6 1434.3 C1747.6 1464.3 1672.0 1464.3 1672.0 1434.3Z" fill="url(#dome)" stroke="#8a0a5a" stroke-width="1"/>
<polygon points="1843.8,1373.0 1875.2,1361.3 1914.5,1366.7 1926.3,1386.3 1893.6,1401.0 1845.8,1393.2" fill="#334c92" />
<polygon points="1845.8,1393.2 1893.6,1401.0 1892.4,1473.7 1851.9,1464.8" fill="#2c3c7a" />
<polygon points="1893.6,1401.0 1926.3,1386.3 1923.1,1455.7 1892.4,1473.7" fill="#324a90" />
<polygon points="1843.8,1373.0 1875.2,1361.3 1914.5,1366.7 1926.3,1386.3 1923.1,1455.7 1892.4,1473.7 1851.9,1464.8 1845.8,1393.2" fill="none" stroke="#1f2c60" stroke-width="1.8" stroke-linejoin="round" />
<polyline points="1845.8,1393.2 1893.6,1401.0 1926.3,1386.3" fill="none" stroke="#1f2c60" stroke-width=".9"/>
<polyline points="1893.6,1401.0 1892.4,1473.7" fill="none" stroke="#1f2c60" stroke-width=".9"/>
<path d="M2020.7 1445.6 C2028.0 1399.6 2042.0 1380.4 2058.0 1380.4 C2074.0 1380.4 2088.0 1399.6 2095.3 1445.6 C2095.3 1475.6 2020.7 1475.6 2020.7 1445.6Z" fill="url(#para)" stroke="#7a7d7f" stroke-width="1.6"/>
<ellipse cx="1710" cy="1626" rx="39" ry="27" fill="#0e9ad0" stroke="#0a6f98" stroke-width="1"/>
<ellipse cx="1883.9" cy="1618" rx="39.7" ry="22" fill="#d9771c" stroke="#7c3f0d" stroke-width="1.2"/><ellipse cx="1883.5" cy="1619" rx="20" ry="12" fill="#b86014" stroke="#7c3f0d" stroke-width="1"/>
<path d="M2021.500 1622 C2020 1598 2040 1586 2062 1596 C2080 1586 2103 1594 2103 1610 V1622Z" fill="#8f6c48" stroke="#5e4429" stroke-width="1.3"/>
<path d="M1758.3 518.9Q1760.1 515.8 1761.9 518.9L1766.2 526.8L1775.0 528.5Q1778.6 529.2 1776.1 531.8L1770.0 538.4L1771.1 547.3Q1771.5 550.9 1768.2 549.4L1760.1 545.6L1752.0 549.4Q1748.7 550.9 1749.1 547.3L1750.2 538.4L1744.1 531.8Q1741.6 529.2 1745.2 528.5L1754.0 526.8Z" fill="#f5f6f9" fill-opacity=".0" stroke="#9babbe" stroke-width="1.2" stroke-linejoin="round"/>
<path d="M1932.3 518.9Q1934.1 515.8 1935.9 518.9L1940.2 526.8L1949.0 528.5Q1952.6 529.2 1950.1 531.8L1944.0 538.4L1945.1 547.3Q1945.5 550.9 1942.2 549.4L1934.1 545.6L1926.0 549.4Q1922.7 550.9 1923.1 547.3L1924.2 538.4L1918.1 531.8Q1915.6 529.2 1919.2 528.5L1928.0 526.8Z" fill="#f5f6f9" fill-opacity=".0" stroke="#9babbe" stroke-width="1.2" stroke-linejoin="round"/>
<path d="M2106.3 518.9Q2108.1 515.8 2109.9 518.9L2114.2 526.8L2123.0 528.5Q2126.6 529.2 2124.1 531.8L2118.0 538.4L2119.1 547.3Q2119.5 550.9 2116.2 549.4L2108.1 545.6L2100.0 549.4Q2096.7 550.9 2097.1 547.3L2098.2 538.4L2092.1 531.8Q2089.6 529.2 2093.2 528.5L2102.0 526.8Z" fill="#f5f6f9" fill-opacity=".0" stroke="#9babbe" stroke-width="1.2" stroke-linejoin="round"/>
<path d="M1758.3 716.9Q1760.1 713.8 1761.9 716.9L1766.2 724.8L1775.0 726.5Q1778.6 727.2 1776.1 729.8L1770.0 736.4L1771.1 745.3Q1771.5 748.9 1768.2 747.4L1760.1 743.6L1752.0 747.4Q1748.7 748.9 1749.1 745.3L1750.2 736.4L1744.1 729.8Q1741.6 727.2 1745.2 726.5L1754.0 724.8Z" fill="#f5f6f9" fill-opacity=".0" stroke="#9babbe" stroke-width="1.2" stroke-linejoin="round"/>
<path d="M1932.3 716.9Q1934.1 713.8 1935.9 716.9L1940.2 724.8L1949.0 726.5Q1952.6 727.2 1950.1 729.8L1944.0 736.4L1945.1 745.3Q1945.5 748.9 1942.2 747.4L1934.1 743.6L1926.0 747.4Q1922.7 748.9 1923.1 745.3L1924.2 736.4L1918.1 729.8Q1915.6 727.2 1919.2 726.5L1928.0 724.8Z" fill="#f5f6f9" fill-opacity=".0" stroke="#9babbe" stroke-width="1.2" stroke-linejoin="round"/>
<path d="M2106.3 716.9Q2108.1 713.8 2109.9 716.9L2114.2 724.8L2123.0 726.5Q2126.6 727.2 2124.1 729.8L2118.0 736.4L2119.1 745.3Q2119.5 748.9 2116.2 747.4L2108.1 743.6L2100.0 747.4Q2096.7 748.9 2097.1 745.3L2098.2 736.4L2092.1 729.8Q2089.6 727.2 2093.2 726.5L2102.0 724.8Z" fill="#f5f6f9" fill-opacity=".0" stroke="#9babbe" stroke-width="1.2" stroke-linejoin="round"/>
<path d="M1758.3 924.9Q1760.1 921.8 1761.9 924.9L1766.2 932.8L1775.0 934.5Q1778.6 935.2 1776.1 937.8L1770.0 944.4L1771.1 953.3Q1771.5 956.9 1768.2 955.4L1760.1 951.6L1752.0 955.4Q1748.7 956.9 1749.1 953.3L1750.2 944.4L1744.1 937.8Q1741.6 935.2 1745.2 934.5L1754.0 932.8Z" fill="#f5f6f9" fill-opacity=".0" stroke="#9babbe" stroke-width="1.2" stroke-linejoin="round"/>
<path d="M1932.3 924.9Q1934.1 921.8 1935.9 924.9L1940.2 932.8L1949.0 934.5Q1952.6 935.2 1950.1 937.8L1944.0 944.4L1945.1 953.3Q1945.5 956.9 1942.2 955.4L1934.1 951.6L1926.0 955.4Q1922.7 956.9 1923.1 953.3L1924.2 944.4L1918.1 937.8Q1915.6 935.2 1919.2 934.5L1928.0 932.8Z" fill="#f5f6f9" fill-opacity=".0" stroke="#9babbe" stroke-width="1.2" stroke-linejoin="round"/>
<path d="M2106.3 924.9Q2108.1 921.8 2109.9 924.9L2114.2 932.8L2123.0 934.5Q2126.6 935.2 2124.1 937.8L2118.0 944.4L2119.1 953.3Q2119.5 956.9 2116.2 955.4L2108.1 951.6L2100.0 955.4Q2096.7 956.9 2097.1 953.3L2098.2 944.4L2092.1 937.8Q2089.6 935.2 2093.2 934.5L2102.0 932.8Z" fill="#f5f6f9" fill-opacity=".0" stroke="#9babbe" stroke-width="1.2" stroke-linejoin="round"/>
<path d="M1758.3 1132.9Q1760.1 1129.8 1761.9 1132.9L1766.2 1140.8L1775.0 1142.5Q1778.6 1143.2 1776.1 1145.8L1770.0 1152.4L1771.1 1161.3Q1771.5 1164.9 1768.2 1163.4L1760.1 1159.6L1752.0 1163.4Q1748.7 1164.9 1749.1 1161.3L1750.2 1152.4L1744.1 1145.8Q1741.6 1143.2 1745.2 1142.5L1754.0 1140.8Z" fill="#f5f6f9" fill-opacity=".0" stroke="#9babbe" stroke-width="1.2" stroke-linejoin="round"/>
<path d="M1932.3 1132.9Q1934.1 1129.8 1935.9 1132.9L1940.2 1140.8L1949.0 1142.5Q1952.6 1143.2 1950.1 1145.8L1944.0 1152.4L1945.1 1161.3Q1945.5 1164.9 1942.2 1163.4L1934.1 1159.6L1926.0 1163.4Q1922.7 1164.9 1923.1 1161.3L1924.2 1152.4L1918.1 1145.8Q1915.6 1143.2 1919.2 1142.5L1928.0 1140.8Z" fill="#f5f6f9" fill-opacity=".0" stroke="#9babbe" stroke-width="1.2" stroke-linejoin="round"/>
<path d="M2106.3 1132.9Q2108.1 1129.8 2109.9 1132.9L2114.2 1140.8L2123.0 1142.5Q2126.6 1143.2 2124.1 1145.8L2118.0 1152.4L2119.1 1161.3Q2119.5 1164.9 2116.2 1163.4L2108.1 1159.6L2100.0 1163.4Q2096.7 1164.9 2097.1 1161.3L2098.2 1152.4L2092.1 1145.8Q2089.6 1143.2 2093.2 1142.5L2102.0 1140.8Z" fill="#f5f6f9" fill-opacity=".0" stroke="#9babbe" stroke-width="1.2" stroke-linejoin="round"/>
<path d="M1758.3 1340.9Q1760.1 1337.8 1761.9 1340.9L1766.2 1348.8L1775.0 1350.5Q1778.6 1351.2 1776.1 1353.8L1770.0 1360.4L1771.1 1369.3Q1771.5 1372.9 1768.2 1371.4L1760.1 1367.6L1752.0 1371.4Q1748.7 1372.9 1749.1 1369.3L1750.2 1360.4L1744.1 1353.8Q1741.6 1351.2 1745.2 1350.5L1754.0 1348.8Z" fill="#f5f6f9" fill-opacity=".0" stroke="#9babbe" stroke-width="1.2" stroke-linejoin="round"/>
<path d="M1932.3 1340.9Q1934.1 1337.8 1935.9 1340.9L1940.2 1348.8L1949.0 1350.5Q1952.6 1351.2 1950.1 1353.8L1944.0 1360.4L1945.1 1369.3Q1945.5 1372.9 1942.2 1371.4L1934.1 1367.6L1926.0 1371.4Q1922.7 1372.9 1923.1 1369.3L1924.2 1360.4L1918.1 1353.8Q1915.6 1351.2 1919.2 1350.5L1928.0 1348.8Z" fill="#f5f6f9" fill-opacity=".0" stroke="#9babbe" stroke-width="1.2" stroke-linejoin="round"/>
<path d="M2106.3 1340.9Q2108.1 1337.8 2109.9 1340.9L2114.2 1348.8L2123.0 1350.5Q2126.6 1351.2 2124.1 1353.8L2118.0 1360.4L2119.1 1369.3Q2119.5 1372.9 2116.2 1371.4L2108.1 1367.6L2100.0 1371.4Q2096.7 1372.9 2097.1 1369.3L2098.2 1360.4L2092.1 1353.8Q2089.6 1351.2 2093.2 1350.5L2102.0 1348.8Z" fill="#f5f6f9" fill-opacity=".0" stroke="#9babbe" stroke-width="1.2" stroke-linejoin="round"/>
<path d="M1758.3 1548.9Q1760.1 1545.8 1761.9 1548.9L1766.2 1556.8L1775.0 1558.5Q1778.6 1559.2 1776.1 1561.8L1770.0 1568.4L1771.1 1577.3Q1771.5 1580.9 1768.2 1579.4L1760.1 1575.6L1752.0 1579.4Q1748.7 1580.9 1749.1 1577.3L1750.2 1568.4L1744.1 1561.8Q1741.6 1559.2 1745.2 1558.5L1754.0 1556.8Z" fill="#f5f6f9" fill-opacity=".0" stroke="#9babbe" stroke-width="1.2" stroke-linejoin="round"/>
<path d="M1932.3 1548.9Q1934.1 1545.8 1935.9 1548.9L1940.2 1556.8L1949.0 1558.5Q1952.6 1559.2 1950.1 1561.8L1944.0 1568.4L1945.1 1577.3Q1945.5 1580.9 1942.2 1579.4L1934.1 1575.6L1926.0 1579.4Q1922.7 1580.9 1923.1 1577.3L1924.2 1568.4L1918.1 1561.8Q1915.6 1559.2 1919.2 1558.5L1928.0 1556.8Z" fill="#f5f6f9" fill-opacity=".0" stroke="#9babbe" stroke-width="1.2" stroke-linejoin="round"/>
<path d="M2106.3 1548.9Q2108.1 1545.8 2109.9 1548.9L2114.2 1556.8L2123.0 1558.5Q2126.6 1559.2 2124.1 1561.8L2118.0 1568.4L2119.1 1577.3Q2119.5 1580.9 2116.2 1579.4L2108.1 1575.6L2100.0 1579.4Q2096.7 1580.9 2097.1 1577.3L2098.2 1568.4L2092.1 1561.8Q2089.6 1559.2 2093.2 1558.5L2102.0 1556.8Z" fill="#f5f6f9" fill-opacity=".0" stroke="#9babbe" stroke-width="1.2" stroke-linejoin="round"/>
<rect x="2134" y="502" width="16" height="761" rx="8" fill="#b9b9b9"/>
</svg>
</body></html>
